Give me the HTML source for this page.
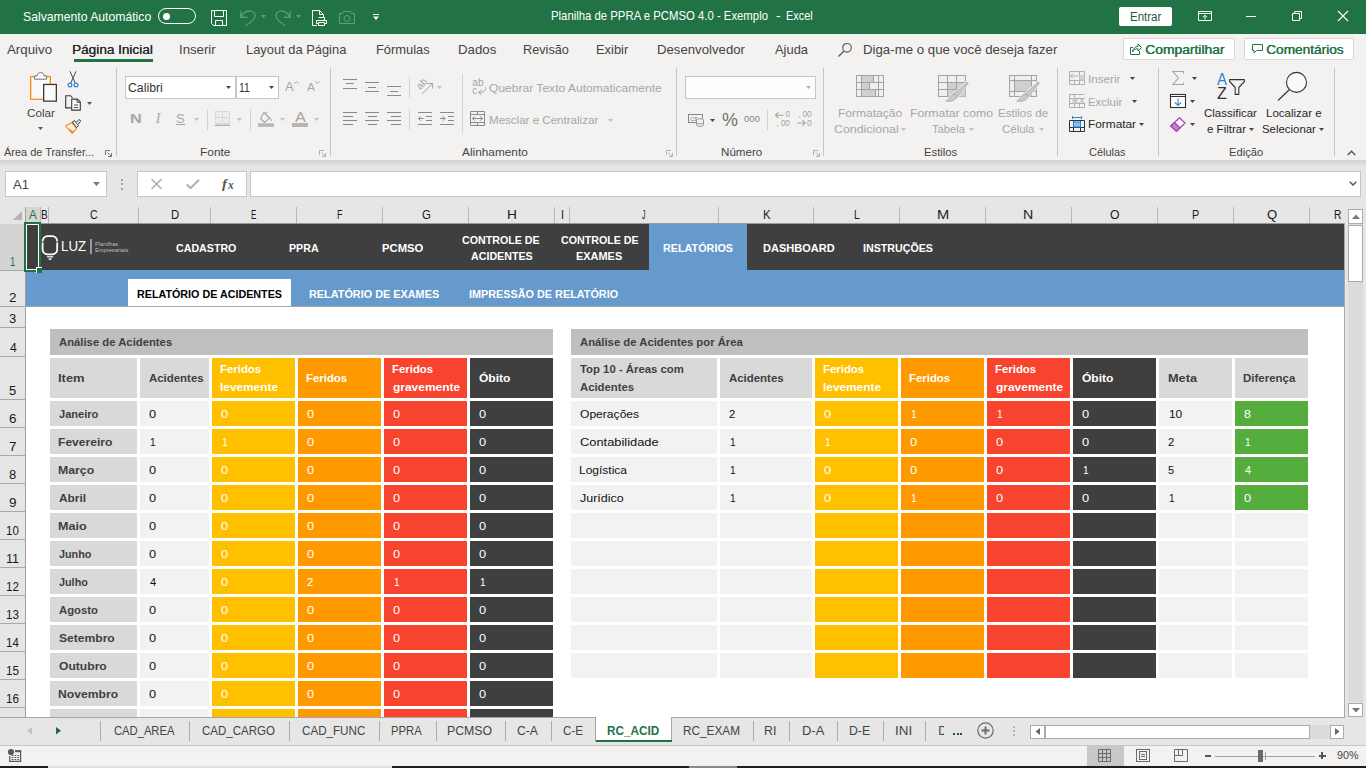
<!DOCTYPE html>
<html><head><meta charset="utf-8"><title>Excel</title>
<style>
html,body{margin:0;padding:0;background:#fff;}
body{width:1366px;height:768px;overflow:hidden;font-family:"Liberation Sans",sans-serif;}
#r{position:relative;width:1366px;height:768px;overflow:hidden;background:#fff;}
#r div,#r svg,#r span{position:absolute;}
#r div{box-sizing:border-box;}
.t{white-space:pre;transform-origin:0 50%;}
svg{overflow:visible;}
</style></head><body><div id="r">
<div style="left:0px;top:0px;width:1366px;height:34px;background:#217346;"></div>
<span id="t0" class="t" style="left:22.62px;top:11.03px;font-size:12.8px;line-height:12.8px;color:#fff;transform:scaleX(0.9534);">Salvamento Automático</span>
<div style="left:158px;top:8px;width:38px;height:16px;border:1px solid #fff;border-radius:8px;"></div>
<div style="left:162.5px;top:12.5px;width:7px;height:7px;background:#fff;border-radius:50%;"></div>
<svg style="left:210.5px;top:10px;" width="16" height="16" viewBox="0 0 16 16"><path d="M0.5 0.5H15.5V15.5H2.5L0.5 13.5Z M3.5 0.5V6.5H12.5V0.5 M4.5 15.5V10.5H11.5V15.5" fill="none" stroke="#fff" stroke-width="1"/></svg>
<svg style="left:240px;top:10px;" width="16" height="16" viewBox="0 0 16 16"><path d="M0.8 1V7.4H7.3 M1 7.2C3 3 7 0.4 11 1C14.6 1.7 16 5.2 14.4 8.2C13.3 10.2 10 12.6 6 15.8" fill="none" stroke="#62a07c" stroke-width="1.1"/></svg>
<svg style="left:260.5px;top:15px;" width="5" height="3" viewBox="0 0 5 3"><path d="M0 0H5L2.5 3Z" fill="#62a07c"/></svg>
<svg style="left:275px;top:10px;" width="16" height="16" viewBox="0 0 16 16"><path d="M15.2 1V7.4H8.7 M15 7.2C13 3 9 0.4 5 1C1.4 1.7 0 5.2 1.6 8.2C2.7 10.2 6 12.6 10 15.8" fill="none" stroke="#62a07c" stroke-width="1.1"/></svg>
<svg style="left:295.5px;top:15px;" width="5" height="3" viewBox="0 0 5 3"><path d="M0 0H5L2.5 3Z" fill="#62a07c"/></svg>
<svg style="left:311.5px;top:10px;" width="15" height="16" viewBox="0 0 15 16"><path d="M5 15.5H0.5V0.5H7.5L11.5 4.5V7 M7.5 0.5V4.5H11.5" fill="none" stroke="#fff" stroke-width="1"/><path d="M6.5 7.5H12.5V10 M4.5 13.5V10.5H14.5V13.5H12.5 M6.5 13.5H4.5 M6.5 12.5H12.5V15.5H6.5Z" fill="none" stroke="#fff" stroke-width="1"/></svg>
<svg style="left:339px;top:11px;" width="16" height="13" viewBox="0 0 16 13"><path d="M0.5 2.5H3.5L4.5 0.5H11.5L12.5 2.5H15.5V12.5H0.5Z" fill="none" stroke="#62a07c" stroke-width="1"/><circle cx="8" cy="7.5" r="3" fill="none" stroke="#62a07c"/></svg>
<svg style="left:373px;top:14px;" width="6" height="6" viewBox="0 0 6 6"><path d="M0 0.5H6" stroke="#fff" stroke-width="1"/><path d="M0 2.5H6L3 6Z" fill="#fff"/></svg>
<span id="t1" class="t" style="left:551.41px;top:10.03px;font-size:12.9px;line-height:12.9px;color:#fff;transform:scaleX(0.8803);">Planilha de PPRA e PCMSO 4.0 - Exemplo</span>
<span id="t2" class="t" style="left:775.86px;top:10.03px;font-size:12.9px;line-height:12.9px;color:#fff;transform:scaleX(1.0798);">-</span>
<span id="t3" class="t" style="left:785.85px;top:10.03px;font-size:12.9px;line-height:12.9px;color:#fff;transform:scaleX(0.8455);">Excel</span>
<div style="left:1119px;top:7px;width:53px;height:19px;background:#fff;border-radius:2px;"></div>
<span id="t4" class="t" style="left:1129.70px;top:11.03px;font-size:12.6px;line-height:12.6px;color:#1e5c3a;transform:scaleX(0.9139);">Entrar</span>
<svg style="left:1198px;top:11px;" width="14" height="10" viewBox="0 0 14 10"><path d="M0.5 0.5H13.5V9.5H0.5Z M0.5 2.5H13.5" fill="none" stroke="#fff"/><path d="M7 8.5V4.5 M5 6.2L7 4.2L9 6.2" fill="none" stroke="#fff"/></svg>
<div style="left:1246px;top:16px;width:10px;height:1px;background:#fff;"></div>
<svg style="left:1292px;top:11px;" width="10" height="10" viewBox="0 0 10 10"><path d="M0.5 2.5H7.5V9.5H0.5Z M2.5 2.5V0.5H9.5V7.5H7.5" fill="none" stroke="#fff"/></svg>
<svg style="left:1338px;top:11px;" width="10" height="10" viewBox="0 0 10 10"><path d="M0 0L10 10M10 0L0 10" fill="none" stroke="#fff" stroke-width="1.1"/></svg>
<div style="left:0px;top:34px;width:1366px;height:126px;background:#f3f2f1;"></div>
<span id="t5" class="t" style="left:7.00px;top:44.03px;font-size:12.8px;line-height:12.8px;color:#444;transform:scaleX(1.0377);">Arquivo</span>
<span id="t6" class="t" style="left:72.44px;top:44.03px;font-size:12.8px;line-height:12.8px;color:#2b2b2b;transform:scaleX(1.0607);text-shadow:0.2px 0 0 #2b2b2b;">Página Inicial</span>
<div style="left:73.5px;top:59px;width:79.5px;height:2.6px;background:#217346;"></div>
<span id="t7" class="t" style="left:179.17px;top:44.03px;font-size:12.8px;line-height:12.8px;color:#444;transform:scaleX(1.0319);">Inserir</span>
<span id="t8" class="t" style="left:245.59px;top:44.03px;font-size:12.8px;line-height:12.8px;color:#444;transform:scaleX(1.0069);">Layout da Página</span>
<span id="t9" class="t" style="left:376.49px;top:44.03px;font-size:12.8px;line-height:12.8px;color:#444;transform:scaleX(1.0069);">Fórmulas</span>
<span id="t10" class="t" style="left:458.46px;top:44.03px;font-size:12.8px;line-height:12.8px;color:#444;transform:scaleX(1.0365);">Dados</span>
<span id="t11" class="t" style="left:523.31px;top:44.03px;font-size:12.8px;line-height:12.8px;color:#444;transform:scaleX(0.9927);">Revisão</span>
<span id="t12" class="t" style="left:596.39px;top:44.03px;font-size:12.8px;line-height:12.8px;color:#444;transform:scaleX(1.0083);">Exibir</span>
<span id="t13" class="t" style="left:657.27px;top:44.03px;font-size:12.8px;line-height:12.8px;color:#444;transform:scaleX(1.0306);">Desenvolvedor</span>
<span id="t14" class="t" style="left:774.90px;top:44.03px;font-size:12.8px;line-height:12.8px;color:#444;transform:scaleX(1.0086);">Ajuda</span>
<svg style="left:838px;top:43px;" width="14" height="14" viewBox="0 0 14 14"><circle cx="9" cy="4.8" r="4.3" fill="none" stroke="#555" stroke-width="1.1"/><path d="M6 8L0.5 13.5" stroke="#555" stroke-width="1.2"/></svg>
<span id="t15" class="t" style="left:863.47px;top:44.03px;font-size:12.8px;line-height:12.8px;color:#444;transform:scaleX(1.0349);">Diga-me o que você deseja fazer</span>
<div style="left:1123px;top:38px;width:111.5px;height:22px;background:#fff;border:1px solid #dad8d6;border-radius:2px;"></div>
<svg style="left:1129.5px;top:43px;" width="12" height="12" viewBox="0 0 12 12"><path d="M3 4.5H0.5V11.5H9.5V8" fill="none" stroke="#217346"/><path d="M2.5 9C3 5.5 5 3.5 8 3.5V1L11.5 4.5L8 8V5.8C5.5 5.8 4 6.5 2.5 9Z" fill="none" stroke="#217346" stroke-linejoin="round"/></svg>
<span id="t16" class="t" style="left:1145.35px;top:44.03px;font-size:12.8px;line-height:12.8px;color:#217346;transform:scaleX(1.0826);text-shadow:0.4px 0 0 #217346;">Compartilhar</span>
<div style="left:1243.5px;top:38px;width:110px;height:22px;background:#fff;border:1px solid #dad8d6;border-radius:2px;"></div>
<svg style="left:1251.5px;top:44px;" width="11" height="10" viewBox="0 0 11 10"><path d="M0.5 0.5H10.5V6.5H4.5L2 9V6.5H0.5Z" fill="none" stroke="#217346"/></svg>
<span id="t17" class="t" style="left:1266.36px;top:44.03px;font-size:12.8px;line-height:12.8px;color:#217346;transform:scaleX(1.0676);text-shadow:0.4px 0 0 #217346;">Comentários</span>
<div style="left:116px;top:68px;width:1px;height:88px;background:#c8c6c4;"></div>
<div style="left:330px;top:68px;width:1px;height:88px;background:#c8c6c4;"></div>
<div style="left:676px;top:68px;width:1px;height:88px;background:#c8c6c4;"></div>
<div style="left:823px;top:68px;width:1px;height:88px;background:#c8c6c4;"></div>
<div style="left:1057px;top:68px;width:1px;height:88px;background:#c8c6c4;"></div>
<div style="left:1158px;top:68px;width:1px;height:88px;background:#c8c6c4;"></div>
<div style="left:1334px;top:68px;width:1px;height:88px;background:#c8c6c4;"></div>
<span id="t18" class="t" style="left:4.20px;top:147.03px;font-size:11.8px;line-height:11.8px;color:#444;transform:scaleX(0.9281);">Área de Transfer...</span>
<span id="t19" class="t" style="left:199.77px;top:147.03px;font-size:11.8px;line-height:11.8px;color:#444;transform:scaleX(1.0079);">Fonte</span>
<span id="t20" class="t" style="left:462.00px;top:147.03px;font-size:11.8px;line-height:11.8px;color:#444;transform:scaleX(1.0028);">Alinhamento</span>
<span id="t21" class="t" style="left:720.59px;top:147.03px;font-size:11.8px;line-height:11.8px;color:#444;transform:scaleX(0.9835);">Número</span>
<span id="t22" class="t" style="left:923.62px;top:147.03px;font-size:11.8px;line-height:11.8px;color:#444;transform:scaleX(0.9562);">Estilos</span>
<span id="t23" class="t" style="left:1089.19px;top:147.03px;font-size:11.8px;line-height:11.8px;color:#444;transform:scaleX(0.9263);">Células</span>
<span id="t24" class="t" style="left:1228.83px;top:147.03px;font-size:11.8px;line-height:11.8px;color:#444;transform:scaleX(0.9458);">Edição</span>
<svg style="left:105px;top:149.5px;" width="7" height="7" viewBox="0 0 7 7"><path d="M0.5 5V0.5H5" fill="none" stroke="#777"/><path d="M2.5 2.5L6 6 M6.5 3V6.5H3" fill="none" stroke="#777"/></svg>
<svg style="left:319px;top:149.5px;" width="7" height="7" viewBox="0 0 7 7"><path d="M0.5 5V0.5H5" fill="none" stroke="#b0b0b0"/><path d="M2.5 2.5L6 6 M6.5 3V6.5H3" fill="none" stroke="#b0b0b0"/></svg>
<svg style="left:665.5px;top:149.5px;" width="7" height="7" viewBox="0 0 7 7"><path d="M0.5 5V0.5H5" fill="none" stroke="#b0b0b0"/><path d="M2.5 2.5L6 6 M6.5 3V6.5H3" fill="none" stroke="#b0b0b0"/></svg>
<svg style="left:812.5px;top:149.5px;" width="7" height="7" viewBox="0 0 7 7"><path d="M0.5 5V0.5H5" fill="none" stroke="#b0b0b0"/><path d="M2.5 2.5L6 6 M6.5 3V6.5H3" fill="none" stroke="#b0b0b0"/></svg>
<svg style="left:1347px;top:149.5px;" width="9" height="6" viewBox="0 0 9 6"><path d="M0.7 5L4.5 1.2L8.3 5" fill="none" stroke="#555" stroke-width="1.4"/></svg>
<svg style="left:29px;top:71px;" width="29" height="32" viewBox="0 0 29 32"><rect x="1.5" y="5.4" width="20" height="23" fill="#fafafa" stroke="#ee8a2a" stroke-width="1"/><rect x="2.5" y="6.4" width="18" height="21" fill="none" stroke="#fbd98a" stroke-width="1"/>
<path d="M5.6 8.2V4.9H8.2C8.2 2.9 9.6 1.5 11.6 1.5C13.6 1.5 15 2.9 15 4.9H17.6V8.2Z" fill="#fafafa" stroke="#757575" stroke-width="1"/>
<rect x="14.65" y="13.45" width="12.7" height="16.7" fill="#fafafa" stroke="#3a3a3a" stroke-width="1.3"/></svg>
<span id="t25" class="t" style="left:27.05px;top:108.03px;font-size:11.8px;line-height:11.8px;color:#444;transform:scaleX(0.9896);">Colar</span>
<svg style="left:38px;top:127px;" width="5" height="3" viewBox="0 0 5 3"><path d="M0 0H5L2.5 3Z" fill="#555"/></svg>
<svg style="left:67px;top:71px;" width="12" height="17" viewBox="0 0 12 17"><path d="M3 0.3L8.2 12 M9 0.3L3.8 12" fill="none" stroke="#4a4a4a" stroke-width="1"/><circle cx="3" cy="14" r="1.9" fill="none" stroke="#2b88d8" stroke-width="1.2"/><circle cx="9" cy="14" r="1.9" fill="none" stroke="#2b88d8" stroke-width="1.2"/></svg>
<svg style="left:65px;top:95px;" width="17" height="16" viewBox="0 0 17 16"><path d="M6.5 12.9H0.7V0.7H5.5L7.5 2.7" fill="none" stroke="#3a3a3a" stroke-width="1.1"/><path d="M6.7 4.1H12.3L15.3 7.1V15.1H6.7Z" fill="#fafafa" stroke="#3a3a3a" stroke-width="1.1"/><path d="M12 4.3V7.3H15" fill="none" stroke="#3a3a3a" stroke-width="0.9"/><path d="M9 10H13.2 M9 12.6H13.2" stroke="#4a4a4a"/></svg>
<svg style="left:87px;top:102px;" width="5" height="3" viewBox="0 0 5 3"><path d="M0 0H5L2.5 3Z" fill="#555"/></svg>
<svg style="left:65px;top:119px;" width="17" height="15" viewBox="0 0 17 15"><path d="M0.6 7L6.8 3.4L11.6 9.6L7.2 14.4Z" fill="#fdf0e2" stroke="#ee8a2a" stroke-width="1.1" stroke-linejoin="round"/><path d="M2 8.5L8.8 12.4L7.2 14.2Z" fill="#ee8a2a"/><path d="M7.3 3L9.4 1.6L13.4 6.6L11.6 8.6Z" fill="#f3f2f1" stroke="#3a3a3a" stroke-width="1" stroke-linejoin="round"/><path d="M11 3.6L13.8 0.9C14.6 0.3 16 1.6 15.4 2.5L12.8 5.6" fill="#f3f2f1" stroke="#3a3a3a" stroke-width="1" stroke-linejoin="round"/></svg>
<div style="left:125px;top:76px;width:111px;height:23px;background:#fff;border:1px solid #c6c6c6;"></div>
<div style="left:236px;top:76px;width:43px;height:23px;background:#fff;border:1px solid #c6c6c6;"></div>
<span id="t26" class="t" style="left:127.72px;top:82.04px;font-size:12px;line-height:12px;color:#333;transform:scaleX(1.0228);">Calibri</span>
<span id="t27" class="t" style="left:239.15px;top:82.04px;font-size:12px;line-height:12px;color:#333;transform:scaleX(0.8645);">11</span>
<svg style="left:226px;top:86px;" width="5" height="3" viewBox="0 0 5 3"><path d="M0 0H5L2.5 3Z" fill="#444"/></svg>
<svg style="left:269px;top:86px;" width="5" height="3" viewBox="0 0 5 3"><path d="M0 0H5L2.5 3Z" fill="#444"/></svg>
<span id="t28" class="t" style="left:285.20px;top:80.03px;font-size:13.5px;line-height:13.5px;color:#a6a6a6;transform:scaleX(0.9702);">A</span>
<svg style="left:294px;top:80.5px;" width="5" height="3" viewBox="0 0 5 3"><path d="M0.3 2.8L2.5 0.5L4.7 2.8" fill="none" stroke="#a6a6a6"/></svg>
<span id="t29" class="t" style="left:307.00px;top:82.02px;font-size:11.5px;line-height:11.5px;color:#a6a6a6;transform:scaleX(1.0354);">A</span>
<svg style="left:315px;top:81px;" width="5" height="3" viewBox="0 0 5 3"><path d="M0.3 0.3L2.5 2.6L4.7 0.3" fill="none" stroke="#a6a6a6"/></svg>
<span id="t30" class="t" style="left:129.58px;top:112.02px;font-size:13.2px;line-height:13.2px;color:#a6a6a6;transform:scaleX(1.2376);font-weight:bold;">N</span>
<span id="t31" class="t" style="left:155.72px;top:112.03px;font-size:14px;line-height:14px;color:#a6a6a6;font-style:italic;font-family:'Liberation Serif',serif;">I</span>
<span id="t32" class="t" style="left:175.79px;top:112.02px;font-size:13.2px;line-height:13.2px;color:#a6a6a6;transform:scaleX(0.9952);">S</span>
<div style="left:176px;top:124px;width:8.5px;height:1px;background:#a6a6a6;"></div>
<svg style="left:194px;top:118px;" width="5" height="3" viewBox="0 0 5 3"><path d="M0 0H5L2.5 3Z" fill="#c0c0c0"/></svg>
<div style="left:207px;top:109px;width:1px;height:21px;background:#d4d2d0;"></div>
<div style="left:250px;top:109px;width:1px;height:21px;background:#d4d2d0;"></div>
<svg style="left:215px;top:111px;" width="15" height="15" viewBox="0 0 15 15"><rect x="0.5" y="0.5" width="14" height="12" fill="#ececec"/><path d="M0.5 0.5H14.5V12.5H0.5Z M7.5 0.5V12.5 M0.5 6.5H14.5" fill="none" stroke="#cdcdcd" stroke-dasharray="1.6 1.1"/><path d="M0 14.2H15" stroke="#a3a3a3" stroke-width="1.2"/></svg>
<svg style="left:237px;top:118px;" width="5" height="3" viewBox="0 0 5 3"><path d="M0 0H5L2.5 3Z" fill="#c0c0c0"/></svg>
<svg style="left:258px;top:111px;" width="16" height="16" viewBox="0 0 16 16"><path d="M6 1.5L11.5 7L6.5 11.5L2.5 7.5Z" fill="none" stroke="#a6a6a6" stroke-width="1.1" stroke-linejoin="round"/><path d="M7.5 3C7.5 1.5 8.5 0.6 9.5 1.4 M11.8 6.5C13.2 8 13.5 9 13.3 10.2" fill="none" stroke="#a6a6a6"/><rect x="0" y="12.3" width="16" height="3.5" fill="#b8b5b2"/></svg>
<svg style="left:280px;top:118px;" width="5" height="3" viewBox="0 0 5 3"><path d="M0 0H5L2.5 3Z" fill="#c0c0c0"/></svg>
<span id="t33" class="t" style="left:294.50px;top:110.03px;font-size:14.5px;line-height:14.5px;color:#a6a6a6;transform:scaleX(1.1291);">A</span>
<div style="left:292px;top:123.3px;width:16px;height:3.5px;background:#b8b5b2;"></div>
<svg style="left:314px;top:118px;" width="5" height="3" viewBox="0 0 5 3"><path d="M0 0H5L2.5 3Z" fill="#c0c0c0"/></svg>
<div style="left:343.0px;top:78.5px;width:14px;height:1px;background:#8a8a8a;"></div>
<div style="left:346.0px;top:83px;width:8px;height:1px;background:#8a8a8a;"></div>
<div style="left:343.0px;top:87.5px;width:14px;height:1px;background:#8a8a8a;"></div>
<div style="left:365.0px;top:82px;width:14px;height:1px;background:#8a8a8a;"></div>
<div style="left:368.0px;top:86.5px;width:8px;height:1px;background:#8a8a8a;"></div>
<div style="left:365.0px;top:91px;width:14px;height:1px;background:#8a8a8a;"></div>
<div style="left:387.0px;top:86px;width:14px;height:1px;background:#8a8a8a;"></div>
<div style="left:390.0px;top:90.5px;width:8px;height:1px;background:#8a8a8a;"></div>
<div style="left:387.0px;top:95px;width:14px;height:1px;background:#8a8a8a;"></div>
<div style="left:409px;top:77px;width:1px;height:21px;background:#d4d2d0;"></div>
<div style="left:409px;top:109px;width:1px;height:21px;background:#d4d2d0;"></div>
<svg style="left:416px;top:77px;" width="18" height="18" viewBox="0 0 18 18"><text x="0" y="0" font-family="Liberation Sans" font-size="10" fill="#a6a6a6" transform="translate(4.2 13) rotate(-47)">ab</text><path d="M6 16.8L16.3 6.8 M11.3 6.5H16.6V11.8" fill="none" stroke="#a6a6a6" stroke-width="1"/></svg>
<svg style="left:437px;top:86px;" width="5" height="3" viewBox="0 0 5 3"><path d="M0 0H5L2.5 3Z" fill="#c0c0c0"/></svg>
<div style="left:462px;top:74px;width:1px;height:59px;background:#d4d2d0;"></div>
<svg style="left:472px;top:78px;" width="15" height="17" viewBox="0 0 15 17"><text x="0.3" y="8.4" font-family="Liberation Sans" font-size="10" fill="#a6a6a6" textLength="11.3" lengthAdjust="spacingAndGlyphs">ab</text><text x="0.3" y="15.8" font-family="Liberation Sans" font-size="10" fill="#a6a6a6">c</text><path d="M13.4 9.3C14.2 12 12.5 14.3 7 14.4 M9.6 11.8L6.6 14.4L9.6 17" fill="none" stroke="#a6a6a6" stroke-width="1"/></svg>
<span id="t34" class="t" style="left:488.83px;top:83.03px;font-size:11.8px;line-height:11.8px;color:#a6a6a6;transform:scaleX(1.0223);">Quebrar Texto Automaticamente</span>
<div style="left:343px;top:112px;width:14px;height:1px;background:#8a8a8a;"></div>
<div style="left:343px;top:116px;width:10px;height:1px;background:#8a8a8a;"></div>
<div style="left:343px;top:120px;width:14px;height:1px;background:#8a8a8a;"></div>
<div style="left:343px;top:124px;width:10px;height:1px;background:#8a8a8a;"></div>
<div style="left:365.0px;top:112px;width:14px;height:1px;background:#8a8a8a;"></div>
<div style="left:367.5px;top:116px;width:9px;height:1px;background:#8a8a8a;"></div>
<div style="left:365.0px;top:120px;width:14px;height:1px;background:#8a8a8a;"></div>
<div style="left:367.5px;top:124px;width:9px;height:1px;background:#8a8a8a;"></div>
<div style="left:387px;top:112px;width:14px;height:1px;background:#8a8a8a;"></div>
<div style="left:391px;top:116px;width:10px;height:1px;background:#8a8a8a;"></div>
<div style="left:387px;top:120px;width:14px;height:1px;background:#8a8a8a;"></div>
<div style="left:391px;top:124px;width:10px;height:1px;background:#8a8a8a;"></div>
<svg style="left:418px;top:111px;" width="14" height="15" viewBox="0 0 14 15"><path d="M0 1.5H14 M8 5.5H14 M8 9.5H14 M0 13.5H14" stroke="#8a8a8a"/><path d="M0.5 7.5H5.5 M2.8 5.2L0.5 7.5L2.8 9.8" fill="none" stroke="#8a8a8a"/></svg>
<svg style="left:440px;top:111px;" width="14" height="15" viewBox="0 0 14 15"><path d="M0 1.5H14 M8 5.5H14 M8 9.5H14 M0 13.5H14" stroke="#8a8a8a"/><path d="M0 7.5H5 M2.7 5.2L5 7.5L2.7 9.8" fill="none" stroke="#8a8a8a"/></svg>
<svg style="left:470px;top:111px;" width="15" height="15" viewBox="0 0 15 15"><path d="M0.5 0.5H14.5V14.5H0.5Z M0.5 3.5H14.5 M0.5 11.5H14.5 M7.5 0.5V3.5 M7.5 11.5V14.5" fill="none" stroke="#8a8a8a"/><path d="M2.5 7.5H12.5 M4.6 5.4L2.5 7.5L4.6 9.6 M10.4 5.4L12.5 7.5L10.4 9.6" fill="none" stroke="#8a8a8a"/></svg>
<span id="t35" class="t" style="left:488.50px;top:115.03px;font-size:11.8px;line-height:11.8px;color:#a6a6a6;transform:scaleX(0.9801);">Mesclar e Centralizar</span>
<svg style="left:608px;top:119px;" width="5" height="3" viewBox="0 0 5 3"><path d="M0 0H5L2.5 3Z" fill="#c0c0c0"/></svg>
<div style="left:685px;top:76px;width:131px;height:23px;background:#fdfdfd;border:1px solid #c6c6c6;"></div>
<svg style="left:806px;top:86px;" width="5" height="3" viewBox="0 0 5 3"><path d="M0 0H5L2.5 3Z" fill="#b0b0b0"/></svg>
<svg style="left:688px;top:114px;" width="16" height="13" viewBox="0 0 16 13"><rect x="0.5" y="0.5" width="14" height="8" fill="none" stroke="#888"/><text x="2" y="7" font-family="Liberation Sans" font-size="6" fill="#888">C$</text><ellipse cx="12" cy="6" rx="3.5" ry="1.3" fill="#f3f2f1" stroke="#999"/><path d="M8.5 6V11C8.5 12.8 15.5 12.8 15.5 11V6 M8.5 8.5C8.5 10.2 15.5 10.2 15.5 8.5" fill="#f3f2f1" stroke="#999"/></svg>
<svg style="left:710px;top:118.5px;" width="5" height="3" viewBox="0 0 5 3"><path d="M0 0H5L2.5 3Z" fill="#444"/></svg>
<span id="t36" class="t" style="left:721.94px;top:111.03px;font-size:18.6px;line-height:18.6px;color:#707070;transform:scaleX(0.9673);">%</span>
<span id="t37" class="t" style="left:743.90px;top:114.03px;font-size:9.6px;line-height:9.6px;color:#888;transform:scaleX(1.0014);">000</span>
<div style="left:767px;top:109px;width:1px;height:21px;background:#d4d2d0;"></div>
<svg style="left:775px;top:110px;" width="16" height="17" viewBox="0 0 16 17"><path d="M0.5 5.3H8.5 M3.4 2.4L0.5 5.3L3.4 8.2" fill="none" stroke="#a3a3a3" stroke-width="1.1"/><text x="10.5" y="7.4" font-family="Liberation Sans" font-size="9" fill="#a3a3a3" textLength="4.3" lengthAdjust="spacingAndGlyphs">0</text><text x="1.6" y="16" font-family="Liberation Sans" font-size="9" fill="#a3a3a3" textLength="2" lengthAdjust="spacingAndGlyphs">,</text><text x="5.9" y="16" font-family="Liberation Sans" font-size="9" fill="#a3a3a3" textLength="8.9" lengthAdjust="spacingAndGlyphs">00</text></svg>
<svg style="left:797px;top:110px;" width="16" height="17" viewBox="0 0 16 17"><text x="1.6" y="7.4" font-family="Liberation Sans" font-size="9" fill="#a3a3a3" textLength="2" lengthAdjust="spacingAndGlyphs">,</text><text x="5.4" y="7.4" font-family="Liberation Sans" font-size="9" fill="#a3a3a3" textLength="9.3" lengthAdjust="spacingAndGlyphs">00</text><path d="M0.3 13H8.3 M5.4 10.1L8.3 13L5.4 15.9" fill="none" stroke="#a3a3a3" stroke-width="1.1"/><text x="10" y="16" font-family="Liberation Sans" font-size="9" fill="#a3a3a3" textLength="4.7" lengthAdjust="spacingAndGlyphs">0</text></svg>
<svg style="left:856px;top:75px;" width="28" height="22" viewBox="0 0 28 22"><rect x="0.5" y="0.5" width="27" height="21" fill="#efefef" stroke="#a3a3a3"/><rect x="5.5" y="1" width="12" height="6" fill="#cfcfcf"/><rect x="5.5" y="8" width="8" height="6" fill="#cfcfcf"/><rect x="5.5" y="15" width="14" height="6" fill="#cfcfcf"/><path d="M5.5 0.5V21.5 M17.5 0.5V7.5 M13.5 7.5V14.5 M19.5 14.5V21.5 M22.5 0.5V21.5 M0.5 7.5H27.5 M0.5 14.5H27.5" fill="none" stroke="#a3a3a3"/></svg>
<span id="t38" class="t" style="left:838.36px;top:108.03px;font-size:11.8px;line-height:11.8px;color:#a6a6a6;transform:scaleX(1.0185);">Formatação</span>
<span id="t39" class="t" style="left:833.82px;top:124.03px;font-size:11.8px;line-height:11.8px;color:#a6a6a6;transform:scaleX(1.0492);">Condicional</span>
<svg style="left:901px;top:127.5px;" width="5" height="3" viewBox="0 0 5 3"><path d="M0 0H5L2.5 3Z" fill="#c0c0c0"/></svg>
<svg style="left:938px;top:75px;" width="31" height="27" viewBox="0 0 31 27"><rect x="0.5" y="0.5" width="27" height="21" fill="#efefef" stroke="#a3a3a3"/><rect x="9.5" y="7.5" width="18" height="14" fill="#cfcfcf"/><path d="M9.5 0.5V21.5 M18.5 0.5V21.5 M0.5 7.5H27.5 M0.5 14.5H27.5" stroke="#a3a3a3"/><g stroke-linejoin="round"><path d="M29.3 7L30.2 8.2L19.4 21.8L16.2 18.8Z" fill="#c9c9c9" stroke="#f3f2f1" stroke-width="2.4"/><path d="M19 21.6C18 25.5 12.5 27.3 7.8 26C11 25 11.5 21.5 15.5 18.6Z" fill="#c9c9c9" stroke="#f3f2f1" stroke-width="2"/><path d="M29.3 7L30.2 8.2L19.4 21.8L16.2 18.8Z" fill="#c9c9c9" stroke="#a6a6a6" stroke-width="0.8"/><path d="M19 21.6C18 25.5 12.5 27.3 7.8 26C11 25 11.5 21.5 15.5 18.6Z" fill="#c9c9c9" stroke="#a6a6a6" stroke-width="0.8"/></g></svg>
<span id="t40" class="t" style="left:910.44px;top:108.03px;font-size:11.8px;line-height:11.8px;color:#a6a6a6;transform:scaleX(1.0382);">Formatar como</span>
<span id="t41" class="t" style="left:931.82px;top:124.03px;font-size:11.8px;line-height:11.8px;color:#a6a6a6;transform:scaleX(0.9520);">Tabela</span>
<svg style="left:968.5px;top:127.5px;" width="5" height="3" viewBox="0 0 5 3"><path d="M0 0H5L2.5 3Z" fill="#c0c0c0"/></svg>
<svg style="left:1009px;top:75px;" width="31" height="27" viewBox="0 0 31 27"><rect x="0.5" y="0.5" width="27" height="21" fill="#efefef" stroke="#a3a3a3"/><rect x="5.5" y="5.5" width="17" height="11" fill="#cfcfcf"/><path d="M5.5 0.5V21.5 M22.5 0.5V21.5 M0.5 5.5H27.5 M0.5 16.5H27.5" stroke="#a3a3a3"/><g stroke-linejoin="round"><path d="M29.3 7L30.2 8.2L19.4 21.8L16.2 18.8Z" fill="#c9c9c9" stroke="#f3f2f1" stroke-width="2.4"/><path d="M19 21.6C18 25.5 12.5 27.3 7.8 26C11 25 11.5 21.5 15.5 18.6Z" fill="#c9c9c9" stroke="#f3f2f1" stroke-width="2"/><path d="M29.3 7L30.2 8.2L19.4 21.8L16.2 18.8Z" fill="#c9c9c9" stroke="#a6a6a6" stroke-width="0.8"/><path d="M19 21.6C18 25.5 12.5 27.3 7.8 26C11 25 11.5 21.5 15.5 18.6Z" fill="#c9c9c9" stroke="#a6a6a6" stroke-width="0.8"/></g></svg>
<span id="t42" class="t" style="left:997.80px;top:108.03px;font-size:11.8px;line-height:11.8px;color:#a6a6a6;transform:scaleX(0.9807);">Estilos de</span>
<span id="t43" class="t" style="left:1002.16px;top:124.03px;font-size:11.8px;line-height:11.8px;color:#a6a6a6;transform:scaleX(0.9705);">Célula</span>
<svg style="left:1039px;top:127.5px;" width="5" height="3" viewBox="0 0 5 3"><path d="M0 0H5L2.5 3Z" fill="#c0c0c0"/></svg>
<svg style="left:1069px;top:71px;" width="16" height="14" viewBox="0 0 16 14"><path d="M0.5 0.5H15.5V13.5H0.5Z M0.5 9.5H15.5 M5.5 9.5V13.5 M10.5 0.5V13.5" fill="none" stroke="#b0b0b0"/><rect x="10.5" y="4" width="5" height="5.5" fill="#d0d0d0"/><path d="M1.5 5H9 M4 2.5L1.5 5L4 7.5" fill="none" stroke="#b0b0b0"/></svg>
<span id="t44" class="t" style="left:1087.59px;top:74.03px;font-size:11.8px;line-height:11.8px;color:#a6a6a6;transform:scaleX(0.9904);">Inserir</span>
<svg style="left:1130px;top:77px;" width="5" height="3" viewBox="0 0 5 3"><path d="M0 0H5L2.5 3Z" fill="#444"/></svg>
<svg style="left:1069px;top:94px;" width="16" height="14" viewBox="0 0 16 14"><path d="M0.5 0.5H15.5 M0.5 4.5H15.5 M0.5 9.5H15.5 M0.5 13.5H15.5 M0.5 0.5V13.5 M5.5 0.5V13.5 M10.5 9.5V13.5 M15.5 9.5V13.5" fill="none" stroke="#b0b0b0"/><rect x="3.5" y="4.5" width="5" height="5" fill="#c8c8c8"/><path d="M10 3.5L15.5 9.5 M15.5 3.5L10 9.5" stroke="#b0b0b0"/></svg>
<span id="t45" class="t" style="left:1087.61px;top:97.02px;font-size:11.8px;line-height:11.8px;color:#a6a6a6;transform:scaleX(0.9673);">Excluir</span>
<svg style="left:1132px;top:99.5px;" width="5" height="3" viewBox="0 0 5 3"><path d="M0 0H5L2.5 3Z" fill="#444"/></svg>
<svg style="left:1069px;top:116px;" width="16" height="16" viewBox="0 0 16 16"><path d="M3.5 0V3 M12.5 0V3 M3.5 1.5H12.5" stroke="#2b88d8"/><path d="M0.5 4.5H15.5V15.5H0.5Z M0.5 11.5H15.5 M4.5 4.5V15.5 M11.5 4.5V15.5" fill="none" stroke="#333"/><rect x="4.5" y="6" width="7" height="5" fill="#8cc0ec" stroke="#2b88d8"/></svg>
<span id="t46" class="t" style="left:1087.87px;top:119.03px;font-size:11.8px;line-height:11.8px;color:#262626;transform:scaleX(1.0046);">Formatar</span>
<svg style="left:1139px;top:122.5px;" width="5" height="3" viewBox="0 0 5 3"><path d="M0 0H5L2.5 3Z" fill="#444"/></svg>
<svg style="left:1172px;top:71px;" width="12" height="14" viewBox="0 0 12 14"><path d="M11.5 2.5V0.5H0.8L6.5 7L0.8 13.5H11.5V11.5" fill="none" stroke="#a6a6a6" stroke-width="1.1"/></svg>
<svg style="left:1192px;top:77px;" width="5" height="3" viewBox="0 0 5 3"><path d="M0 0H5L2.5 3Z" fill="#444"/></svg>
<svg style="left:1170px;top:94px;" width="16" height="14" viewBox="0 0 16 14"><rect x="0.5" y="0.5" width="15" height="13" fill="#fff" stroke="#333" stroke-width="1.1"/><path d="M0.5 2.5H15.5" stroke="#333"/><path d="M8 4.5V11.5 M5 8.5L8 11.5L11 8.5" fill="none" stroke="#2b88d8" stroke-width="1.1"/></svg>
<svg style="left:1190px;top:99.5px;" width="5" height="3" viewBox="0 0 5 3"><path d="M0 0H5L2.5 3Z" fill="#444"/></svg>
<svg style="left:1170px;top:116.5px;" width="16" height="15" viewBox="0 0 16 15"><path d="M0.8 9L9.5 0.8L15 6L6.5 14.2Z" fill="#fff" stroke="#a743b3" stroke-width="1.2" stroke-linejoin="round"/><path d="M0.8 9L4.5 5.5L10 10.8L6.5 14.2Z" fill="#c77dd0" stroke="#a743b3" stroke-width="1.2" stroke-linejoin="round"/></svg>
<svg style="left:1190px;top:122.5px;" width="5" height="3" viewBox="0 0 5 3"><path d="M0 0H5L2.5 3Z" fill="#444"/></svg>
<span id="t47" class="t" style="left:1217.00px;top:71.02px;font-size:16.2px;line-height:16.2px;color:#2b88d8;transform:scaleX(0.9187);">A</span>
<span id="t48" class="t" style="left:1216.50px;top:86.02px;font-size:15.8px;line-height:15.8px;color:#333;transform:scaleX(1.0127);">Z</span>
<svg style="left:1229px;top:79px;" width="16" height="16" viewBox="0 0 16 16"><path d="M0.6 0.6H15.4V2.5L9.8 8.5V15.4H6.2V8.5L0.6 2.5Z" fill="#f3f2f1" stroke="#333" stroke-width="1.1" stroke-linejoin="round"/></svg>
<span id="t49" class="t" style="left:1204.06px;top:108.03px;font-size:11.8px;line-height:11.8px;color:#262626;transform:scaleX(0.9720);">Classificar</span>
<span id="t50" class="t" style="left:1207.04px;top:124.03px;font-size:11.8px;line-height:11.8px;color:#262626;transform:scaleX(0.9756);">e Filtrar</span>
<svg style="left:1249px;top:127.5px;" width="5" height="3" viewBox="0 0 5 3"><path d="M0 0H5L2.5 3Z" fill="#444"/></svg>
<svg style="left:1277px;top:71px;" width="31" height="31" viewBox="0 0 31 31"><circle cx="19.5" cy="11.4" r="10" fill="#fafafa" stroke="#333" stroke-width="1.1"/><path d="M12.5 18.5L1 29.5" stroke="#333" stroke-width="1.2"/></svg>
<span id="t51" class="t" style="left:1265.80px;top:108.03px;font-size:11.8px;line-height:11.8px;color:#262626;transform:scaleX(0.9755);">Localizar e</span>
<span id="t52" class="t" style="left:1261.84px;top:124.03px;font-size:11.8px;line-height:11.8px;color:#262626;transform:scaleX(0.9669);">Selecionar</span>
<svg style="left:1319px;top:127.5px;" width="5" height="3" viewBox="0 0 5 3"><path d="M0 0H5L2.5 3Z" fill="#444"/></svg>
<div style="left:0px;top:160px;width:1366px;height:608px;background:#e6e6e6;"></div>
<div style="left:0px;top:160px;width:1366px;height:7px;background:linear-gradient(#d2d2d2,#e6e6e6);"></div>
<div style="left:5px;top:171px;width:102px;height:26px;background:#fff;border:1px solid #c6c6c6;"></div>
<span id="t53" class="t" style="left:12.50px;top:179.03px;font-size:12.8px;line-height:12.8px;color:#444;transform:scaleX(1.0173);">A1</span>
<svg style="left:93px;top:181.5px;" width="7" height="4" viewBox="0 0 7 4"><path d="M0 0H7L3.5 4Z" fill="#777"/></svg>
<div style="left:121px;top:178.5px;width:2px;height:2px;background:#a3a3a3;"></div>
<div style="left:121px;top:183px;width:2px;height:2px;background:#a3a3a3;"></div>
<div style="left:121px;top:187.5px;width:2px;height:2px;background:#a3a3a3;"></div>
<div style="left:137px;top:171px;width:110px;height:26px;background:#fff;border:1px solid #c6c6c6;"></div>
<svg style="left:150.5px;top:179px;" width="11" height="10" viewBox="0 0 11 10"><path d="M0.5 0L10.5 10 M10.5 0L0.5 10" stroke="#b0b0b0" stroke-width="1.6"/></svg>
<svg style="left:185.5px;top:179px;" width="14" height="10" viewBox="0 0 14 10"><path d="M0.8 5.5L4.5 9.2L13 0.8" fill="none" stroke="#b0b0b0" stroke-width="2"/></svg>
<span id="t54" class="t" style="left:222.30px;top:177.03px;font-size:13.5px;line-height:13.5px;color:#555;transform:scaleX(1.1062);font-weight:bold;font-style:italic;font-family:'Liberation Serif',serif;">f</span>
<span id="t55" class="t" style="left:228.38px;top:180.03px;font-size:11.5px;line-height:11.5px;color:#555;transform:scaleX(0.9913);font-weight:bold;font-style:italic;font-family:'Liberation Serif',serif;">x</span>
<div style="left:250px;top:171px;width:1111px;height:26px;background:#fff;border:1px solid #c6c6c6;"></div>
<svg style="left:1349px;top:181px;" width="8" height="5" viewBox="0 0 8 5"><path d="M0.7 0.7L4 4L7.3 0.7" fill="none" stroke="#555" stroke-width="1.5"/></svg>
<div style="left:26px;top:224px;width:1318px;height:493px;background:#fff;"></div>
<div style="left:26px;top:207px;width:14px;height:16px;background:#d5d5d5;"></div>
<div style="left:40px;top:207px;width:1px;height:16px;background:#b9b9b9;"></div>
<span id="t56" class="t" style="left:29.15px;top:209.03px;font-size:12.3px;line-height:12.3px;color:#217346;transform:scaleX(0.9559);">A</span>
<div style="left:48px;top:207px;width:1px;height:16px;background:#b9b9b9;"></div>
<span id="t57" class="t" style="left:41.26px;top:209.03px;font-size:12.3px;line-height:12.3px;color:#1a1a1a;transform:scaleX(0.8177);">B</span>
<div style="left:138px;top:207px;width:1px;height:16px;background:#b9b9b9;"></div>
<span id="t58" class="t" style="left:90.45px;top:209.03px;font-size:12.3px;line-height:12.3px;color:#1a1a1a;transform:scaleX(0.8630);">C</span>
<div style="left:210px;top:207px;width:1px;height:16px;background:#b9b9b9;"></div>
<span id="t59" class="t" style="left:170.97px;top:209.03px;font-size:12.3px;line-height:12.3px;color:#1a1a1a;transform:scaleX(0.9206);">D</span>
<div style="left:296px;top:207px;width:1px;height:16px;background:#b9b9b9;"></div>
<span id="t60" class="t" style="left:251.42px;top:209.03px;font-size:12.3px;line-height:12.3px;color:#1a1a1a;transform:scaleX(0.6541);">E</span>
<div style="left:382px;top:207px;width:1px;height:16px;background:#b9b9b9;"></div>
<span id="t61" class="t" style="left:337.35px;top:209.03px;font-size:12.3px;line-height:12.3px;color:#1a1a1a;transform:scaleX(0.7317);">F</span>
<div style="left:468px;top:207px;width:1px;height:16px;background:#b9b9b9;"></div>
<span id="t62" class="t" style="left:421.81px;top:209.03px;font-size:12.3px;line-height:12.3px;color:#1a1a1a;transform:scaleX(0.9292);">G</span>
<div style="left:554px;top:207px;width:1px;height:16px;background:#b9b9b9;"></div>
<span id="t63" class="t" style="left:506.78px;top:209.03px;font-size:12.3px;line-height:12.3px;color:#1a1a1a;transform:scaleX(1.1129);">H</span>
<div style="left:569px;top:207px;width:1px;height:16px;background:#b9b9b9;"></div>
<span id="t64" class="t" style="left:560.99px;top:209.03px;font-size:12.3px;line-height:12.3px;color:#1a1a1a;transform:scaleX(0.8920);">I</span>
<div style="left:718px;top:207px;width:1px;height:16px;background:#b9b9b9;"></div>
<span id="t65" class="t" style="left:642.04px;top:209.03px;font-size:12.3px;line-height:12.3px;color:#1a1a1a;transform:scaleX(0.5589);">J</span>
<div style="left:813px;top:207px;width:1px;height:16px;background:#b9b9b9;"></div>
<span id="t66" class="t" style="left:762.96px;top:209.03px;font-size:12.3px;line-height:12.3px;color:#1a1a1a;transform:scaleX(0.9281);">K</span>
<div style="left:899px;top:207px;width:1px;height:16px;background:#b9b9b9;"></div>
<span id="t67" class="t" style="left:853.86px;top:209.03px;font-size:12.3px;line-height:12.3px;color:#1a1a1a;transform:scaleX(0.8253);">L</span>
<div style="left:985px;top:207px;width:1px;height:16px;background:#b9b9b9;"></div>
<span id="t68" class="t" style="left:936.50px;top:209.03px;font-size:12.3px;line-height:12.3px;color:#1a1a1a;transform:scaleX(1.1944);">M</span>
<div style="left:1071px;top:207px;width:1px;height:16px;background:#b9b9b9;"></div>
<span id="t69" class="t" style="left:1023.44px;top:209.03px;font-size:12.3px;line-height:12.3px;color:#1a1a1a;transform:scaleX(1.1563);">N</span>
<div style="left:1157px;top:207px;width:1px;height:16px;background:#b9b9b9;"></div>
<span id="t70" class="t" style="left:1109.88px;top:209.03px;font-size:12.3px;line-height:12.3px;color:#1a1a1a;transform:scaleX(0.9933);">O</span>
<div style="left:1233px;top:207px;width:1px;height:16px;background:#b9b9b9;"></div>
<span id="t71" class="t" style="left:1191.61px;top:209.03px;font-size:12.3px;line-height:12.3px;color:#1a1a1a;transform:scaleX(0.8771);">P</span>
<div style="left:1309px;top:207px;width:1px;height:16px;background:#b9b9b9;"></div>
<span id="t72" class="t" style="left:1266.84px;top:209.03px;font-size:12.3px;line-height:12.3px;color:#1a1a1a;transform:scaleX(1.0643);">Q</span>
<span id="t73" class="t" style="left:1333.84px;top:209.03px;font-size:12.3px;line-height:12.3px;color:#1a1a1a;transform:scaleX(0.8405);">R</span>
<svg style="left:12.8px;top:210.7px;" width="9" height="9" viewBox="0 0 9 9"><path d="M9 0V9H0Z" fill="#b4b4b4"/></svg>
<div style="left:0px;top:224px;width:25px;height:46px;background:#d3d3d3;"></div>
<div style="left:0px;top:270px;width:25px;height:1px;background:#a8a8a8;"></div>
<span id="t74" class="t" style="left:10.16px;top:256.02px;font-size:12px;line-height:12px;color:#217346;transform:scaleX(0.7908);">1</span>
<div style="left:0px;top:306px;width:25px;height:1px;background:#a8a8a8;"></div>
<span id="t75" class="t" style="left:9.12px;top:292.02px;font-size:12px;line-height:12px;color:#1a1a1a;transform:scaleX(1.1200);">2</span>
<div style="left:0px;top:327px;width:25px;height:1px;background:#a8a8a8;"></div>
<span id="t76" class="t" style="left:9.34px;top:313.02px;font-size:12px;line-height:12px;color:#1a1a1a;transform:scaleX(1.0839);">3</span>
<div style="left:0px;top:356px;width:25px;height:1px;background:#a8a8a8;"></div>
<span id="t77" class="t" style="left:9.56px;top:342.02px;font-size:12px;line-height:12px;color:#1a1a1a;transform:scaleX(1.0182);">4</span>
<div style="left:0px;top:399px;width:25px;height:1px;background:#a8a8a8;"></div>
<span id="t78" class="t" style="left:9.34px;top:385.02px;font-size:12px;line-height:12px;color:#1a1a1a;transform:scaleX(1.0839);">5</span>
<div style="left:0px;top:427px;width:25px;height:1px;background:#a8a8a8;"></div>
<span id="t79" class="t" style="left:9.12px;top:413.02px;font-size:12px;line-height:12px;color:#1a1a1a;transform:scaleX(1.1200);">6</span>
<div style="left:0px;top:455px;width:25px;height:1px;background:#a8a8a8;"></div>
<span id="t80" class="t" style="left:9.12px;top:441.02px;font-size:12px;line-height:12px;color:#1a1a1a;transform:scaleX(1.1200);">7</span>
<div style="left:0px;top:483px;width:25px;height:1px;background:#a8a8a8;"></div>
<span id="t81" class="t" style="left:9.34px;top:469.02px;font-size:12px;line-height:12px;color:#1a1a1a;transform:scaleX(1.0839);">8</span>
<div style="left:0px;top:511px;width:25px;height:1px;background:#a8a8a8;"></div>
<span id="t82" class="t" style="left:9.12px;top:497.02px;font-size:12px;line-height:12px;color:#1a1a1a;transform:scaleX(1.1200);">9</span>
<div style="left:0px;top:539px;width:25px;height:1px;background:#a8a8a8;"></div>
<span id="t83" class="t" style="left:6.28px;top:525.02px;font-size:12px;line-height:12px;color:#1a1a1a;transform:scaleX(0.9594);">10</span>
<div style="left:0px;top:567px;width:25px;height:1px;background:#a8a8a8;"></div>
<span id="t84" class="t" style="left:6.21px;top:553.02px;font-size:12px;line-height:12px;color:#1a1a1a;transform:scaleX(1.0516);">11</span>
<div style="left:0px;top:595px;width:25px;height:1px;background:#a8a8a8;"></div>
<span id="t85" class="t" style="left:6.27px;top:581.02px;font-size:12px;line-height:12px;color:#1a1a1a;transform:scaleX(0.9743);">12</span>
<div style="left:0px;top:623px;width:25px;height:1px;background:#a8a8a8;"></div>
<span id="t86" class="t" style="left:6.27px;top:609.02px;font-size:12px;line-height:12px;color:#1a1a1a;transform:scaleX(0.9743);">13</span>
<div style="left:0px;top:651px;width:25px;height:1px;background:#a8a8a8;"></div>
<span id="t87" class="t" style="left:6.28px;top:637.02px;font-size:12px;line-height:12px;color:#1a1a1a;transform:scaleX(0.9594);">14</span>
<div style="left:0px;top:679px;width:25px;height:1px;background:#a8a8a8;"></div>
<span id="t88" class="t" style="left:6.27px;top:665.02px;font-size:12px;line-height:12px;color:#1a1a1a;transform:scaleX(0.9743);">15</span>
<div style="left:0px;top:707px;width:25px;height:1px;background:#a8a8a8;"></div>
<span id="t89" class="t" style="left:6.27px;top:693.02px;font-size:12px;line-height:12px;color:#1a1a1a;transform:scaleX(0.9743);">16</span>
<div style="left:25px;top:207px;width:1px;height:510px;background:#a0a0a0;"></div>
<div style="left:26px;top:224px;width:1318px;height:46px;background:#3f3f3f;"></div>
<div style="left:26px;top:270px;width:1318px;height:36px;background:#6699cc;"></div>
<div style="left:649px;top:224px;width:98px;height:47px;background:#6699cc;"></div>
<div style="left:26px;top:306px;width:1318px;height:1px;background:#a8a8a8;"></div>
<div style="left:26px;top:223px;width:1318px;height:1px;background:#9a9a9a;"></div>
<div style="left:24px;top:222px;width:17px;height:50px;border:2px solid #217346;"></div>
<div style="left:26px;top:224px;width:13px;height:46px;border:1px solid #fff;"></div>
<div style="left:36px;top:267px;width:6px;height:6px;background:#fff;"></div>
<div style="left:37px;top:268px;width:5px;height:5px;background:#217346;"></div>
<svg style="left:41px;top:234px;" width="18" height="27" viewBox="0 0 18 27"><path d="M1.6 7.6V7.1A5 5 0 0 1 6.6 2.1H11.2A5 5 0 0 1 16.2 7.1V7.6 M1.6 8.5V15.3A5 5 0 0 0 6.6 20.3H11.2A5 5 0 0 0 16.2 15.3V8.5" fill="none" stroke="#fff" stroke-width="1.8"/><path d="M6 22.8H12.2" stroke="#fff" stroke-width="1.2"/><path d="M7 24.4H11.2L9.8 25.9H8.4Z" fill="#fff"/></svg>
<span id="t90" class="t" style="left:61.46px;top:239.03px;font-size:14px;line-height:14px;color:#fff;transform:scaleX(0.9516);">LUZ</span>
<div style="left:90.3px;top:239px;width:1.4px;height:14.5px;background:#9a9a9a;"></div>
<span id="t91" class="t" style="left:94.75px;top:241.03px;font-size:6px;line-height:6px;color:#bdbdbd;transform:scaleX(0.9539);">Planilhas</span>
<span id="t92" class="t" style="left:94.75px;top:247.03px;font-size:6px;line-height:6px;color:#bdbdbd;transform:scaleX(0.9519);">Empresariais</span>
<span id="t93" class="t" style="left:175.67px;top:242.02px;font-size:11.7px;line-height:11.7px;color:#fff;transform:scaleX(0.9115);font-weight:bold;">CADASTRO</span>
<span id="t94" class="t" style="left:289.03px;top:242.02px;font-size:11.7px;line-height:11.7px;color:#fff;transform:scaleX(0.9128);font-weight:bold;">PPRA</span>
<span id="t95" class="t" style="left:381.50px;top:242.02px;font-size:11.7px;line-height:11.7px;color:#fff;transform:scaleX(0.9630);font-weight:bold;">PCMSO</span>
<span id="t96" class="t" style="left:462.17px;top:234.02px;font-size:11.7px;line-height:11.7px;color:#fff;transform:scaleX(0.9127);font-weight:bold;">CONTROLE DE</span>
<span id="t97" class="t" style="left:470.53px;top:250.03px;font-size:11.7px;line-height:11.7px;color:#fff;transform:scaleX(0.9134);font-weight:bold;">ACIDENTES</span>
<span id="t98" class="t" style="left:560.57px;top:234.02px;font-size:11.7px;line-height:11.7px;color:#fff;transform:scaleX(0.9127);font-weight:bold;">CONTROLE DE</span>
<span id="t99" class="t" style="left:576.32px;top:250.03px;font-size:11.7px;line-height:11.7px;color:#fff;transform:scaleX(0.9365);font-weight:bold;">EXAMES</span>
<span id="t100" class="t" style="left:662.72px;top:242.02px;font-size:11.7px;line-height:11.7px;color:#fff;transform:scaleX(0.9239);font-weight:bold;">RELATÓRIOS</span>
<span id="t101" class="t" style="left:762.71px;top:242.02px;font-size:11.7px;line-height:11.7px;color:#fff;transform:scaleX(0.9424);font-weight:bold;">DASHBOARD</span>
<span id="t102" class="t" style="left:863.03px;top:242.02px;font-size:11.7px;line-height:11.7px;color:#fff;transform:scaleX(0.9132);font-weight:bold;">INSTRUÇÕES</span>
<div style="left:128px;top:279px;width:163px;height:27px;background:#fff;"></div>
<span id="t103" class="t" style="left:136.73px;top:288.03px;font-size:11.7px;line-height:11.7px;color:#000;transform:scaleX(0.9190);font-weight:bold;">RELATÓRIO DE ACIDENTES</span>
<span id="t104" class="t" style="left:308.92px;top:288.03px;font-size:11.7px;line-height:11.7px;color:#fff;transform:scaleX(0.9292);font-weight:bold;">RELATÓRIO DE EXAMES</span>
<span id="t105" class="t" style="left:468.62px;top:288.03px;font-size:11.7px;line-height:11.7px;color:#fff;transform:scaleX(0.9272);font-weight:bold;">IMPRESSÃO DE RELATÓRIO</span>
<div style="left:50px;top:329px;width:503px;height:26px;background:#bfbfbf;"></div>
<span id="t106" class="t" style="left:58.82px;top:336.02px;font-size:11.6px;line-height:11.6px;color:#3f3f3f;transform:scaleX(0.9739);font-weight:bold;">Análise de Acidentes</span>
<div style="left:571px;top:329px;width:737px;height:26px;background:#bfbfbf;"></div>
<span id="t107" class="t" style="left:580.02px;top:336.02px;font-size:11.6px;line-height:11.6px;color:#3f3f3f;transform:scaleX(0.9743);font-weight:bold;">Análise de Acidentes por Área</span>
<div style="left:50px;top:358px;width:87px;height:40px;background:#d9d9d9;"></div>
<div style="left:140px;top:358px;width:69px;height:40px;background:#d9d9d9;"></div>
<div style="left:212px;top:358px;width:83px;height:40px;background:#ffc000;"></div>
<div style="left:298px;top:358px;width:83px;height:40px;background:#ff9900;"></div>
<div style="left:384px;top:358px;width:83px;height:40px;background:#f8432e;"></div>
<div style="left:470px;top:358px;width:83px;height:40px;background:#3f3f3f;"></div>
<div style="left:571px;top:358px;width:146px;height:40px;background:#d9d9d9;"></div>
<div style="left:720px;top:358px;width:92px;height:40px;background:#d9d9d9;"></div>
<div style="left:815px;top:358px;width:83px;height:40px;background:#ffc000;"></div>
<div style="left:901px;top:358px;width:83px;height:40px;background:#ff9900;"></div>
<div style="left:987px;top:358px;width:83px;height:40px;background:#f8432e;"></div>
<div style="left:1073px;top:358px;width:83px;height:40px;background:#3f3f3f;"></div>
<div style="left:1159px;top:358px;width:73px;height:40px;background:#d9d9d9;"></div>
<div style="left:1235px;top:358px;width:73px;height:40px;background:#d9d9d9;"></div>
<span id="t108" class="t" style="left:58.19px;top:372.03px;font-size:11.6px;line-height:11.6px;color:#3f3f3f;transform:scaleX(1.1152);font-weight:bold;">Item</span>
<span id="t109" class="t" style="left:148.82px;top:372.03px;font-size:11.6px;line-height:11.6px;color:#3f3f3f;transform:scaleX(0.9856);font-weight:bold;">Acidentes</span>
<span id="t110" class="t" style="left:220.29px;top:363.02px;font-size:11.6px;line-height:11.6px;color:#fff;transform:scaleX(0.9828);font-weight:bold;">Feridos</span>
<span id="t111" class="t" style="left:220.26px;top:381.03px;font-size:11.6px;line-height:11.6px;color:#fff;transform:scaleX(1.0228);font-weight:bold;">levemente</span>
<span id="t112" class="t" style="left:306.29px;top:372.03px;font-size:11.6px;line-height:11.6px;color:#fff;transform:scaleX(0.9828);font-weight:bold;">Feridos</span>
<span id="t113" class="t" style="left:392.29px;top:363.02px;font-size:11.6px;line-height:11.6px;color:#fff;transform:scaleX(0.9828);font-weight:bold;">Feridos</span>
<span id="t114" class="t" style="left:392.63px;top:381.03px;font-size:11.6px;line-height:11.6px;color:#fff;transform:scaleX(1.0315);font-weight:bold;">gravemente</span>
<span id="t115" class="t" style="left:478.62px;top:372.03px;font-size:11.6px;line-height:11.6px;color:#fff;transform:scaleX(1.0393);font-weight:bold;">Óbito</span>
<span id="t116" class="t" style="left:580.20px;top:363.02px;font-size:11.6px;line-height:11.6px;color:#3f3f3f;transform:scaleX(0.9787);font-weight:bold;">Top 10 - Áreas com</span>
<span id="t117" class="t" style="left:580.02px;top:381.03px;font-size:11.6px;line-height:11.6px;color:#3f3f3f;transform:scaleX(0.9747);font-weight:bold;">Acidentes</span>
<span id="t118" class="t" style="left:728.92px;top:372.03px;font-size:11.6px;line-height:11.6px;color:#3f3f3f;transform:scaleX(0.9856);font-weight:bold;">Acidentes</span>
<span id="t119" class="t" style="left:823.29px;top:363.02px;font-size:11.6px;line-height:11.6px;color:#fff;transform:scaleX(0.9828);font-weight:bold;">Feridos</span>
<span id="t120" class="t" style="left:823.26px;top:381.03px;font-size:11.6px;line-height:11.6px;color:#fff;transform:scaleX(1.0228);font-weight:bold;">levemente</span>
<span id="t121" class="t" style="left:909.29px;top:372.03px;font-size:11.6px;line-height:11.6px;color:#fff;transform:scaleX(0.9828);font-weight:bold;">Feridos</span>
<span id="t122" class="t" style="left:995.29px;top:363.02px;font-size:11.6px;line-height:11.6px;color:#fff;transform:scaleX(0.9828);font-weight:bold;">Feridos</span>
<span id="t123" class="t" style="left:995.63px;top:381.03px;font-size:11.6px;line-height:11.6px;color:#fff;transform:scaleX(1.0315);font-weight:bold;">gravemente</span>
<span id="t124" class="t" style="left:1081.62px;top:372.03px;font-size:11.6px;line-height:11.6px;color:#fff;transform:scaleX(1.0393);font-weight:bold;">Óbito</span>
<span id="t125" class="t" style="left:1167.50px;top:372.03px;font-size:11.6px;line-height:11.6px;color:#3f3f3f;transform:scaleX(1.0979);font-weight:bold;">Meta</span>
<span id="t126" class="t" style="left:1243.28px;top:372.03px;font-size:11.6px;line-height:11.6px;color:#3f3f3f;transform:scaleX(0.9901);font-weight:bold;">Diferença</span>
<div style="left:50px;top:401px;width:87px;height:25px;background:#d9d9d9;"></div>
<div style="left:140px;top:401px;width:69px;height:25px;background:#f2f2f2;"></div>
<div style="left:212px;top:401px;width:83px;height:25px;background:#ffc000;"></div>
<div style="left:298px;top:401px;width:83px;height:25px;background:#ff9900;"></div>
<div style="left:384px;top:401px;width:83px;height:25px;background:#f8432e;"></div>
<div style="left:470px;top:401px;width:83px;height:25px;background:#3f3f3f;"></div>
<span id="t127" class="t" style="left:59.00px;top:408.03px;font-size:11.6px;line-height:11.6px;color:#3f3f3f;transform:scaleX(0.9539);font-weight:bold;">Janeiro</span>
<span id="t128" class="t" style="left:149.10px;top:408.03px;font-size:11.6px;line-height:11.6px;color:#111;transform:scaleX(1.1034);">0</span>
<span id="t129" class="t" style="left:221.10px;top:408.03px;font-size:11.6px;line-height:11.6px;color:#fff;transform:scaleX(1.1034);">0</span>
<span id="t130" class="t" style="left:307.10px;top:408.03px;font-size:11.6px;line-height:11.6px;color:#fff;transform:scaleX(1.1034);">0</span>
<span id="t131" class="t" style="left:393.10px;top:408.03px;font-size:11.6px;line-height:11.6px;color:#fff;transform:scaleX(1.1034);">0</span>
<span id="t132" class="t" style="left:479.10px;top:408.03px;font-size:11.6px;line-height:11.6px;color:#fff;transform:scaleX(1.1034);">0</span>
<div style="left:50px;top:429px;width:87px;height:25px;background:#d9d9d9;"></div>
<div style="left:140px;top:429px;width:69px;height:25px;background:#f2f2f2;"></div>
<div style="left:212px;top:429px;width:83px;height:25px;background:#ffc000;"></div>
<div style="left:298px;top:429px;width:83px;height:25px;background:#ff9900;"></div>
<div style="left:384px;top:429px;width:83px;height:25px;background:#f8432e;"></div>
<div style="left:470px;top:429px;width:83px;height:25px;background:#3f3f3f;"></div>
<span id="t133" class="t" style="left:58.24px;top:436.03px;font-size:11.6px;line-height:11.6px;color:#3f3f3f;transform:scaleX(1.0426);font-weight:bold;">Fevereiro</span>
<span id="t134" class="t" style="left:149.67px;top:436.03px;font-size:11.6px;line-height:11.6px;color:#111;transform:scaleX(0.8751);">1</span>
<span id="t135" class="t" style="left:221.67px;top:436.03px;font-size:11.6px;line-height:11.6px;color:#fff;transform:scaleX(0.8751);">1</span>
<span id="t136" class="t" style="left:307.10px;top:436.03px;font-size:11.6px;line-height:11.6px;color:#fff;transform:scaleX(1.1034);">0</span>
<span id="t137" class="t" style="left:393.10px;top:436.03px;font-size:11.6px;line-height:11.6px;color:#fff;transform:scaleX(1.1034);">0</span>
<span id="t138" class="t" style="left:479.10px;top:436.03px;font-size:11.6px;line-height:11.6px;color:#fff;transform:scaleX(1.1034);">0</span>
<div style="left:50px;top:457px;width:87px;height:25px;background:#d9d9d9;"></div>
<div style="left:140px;top:457px;width:69px;height:25px;background:#f2f2f2;"></div>
<div style="left:212px;top:457px;width:83px;height:25px;background:#ffc000;"></div>
<div style="left:298px;top:457px;width:83px;height:25px;background:#ff9900;"></div>
<div style="left:384px;top:457px;width:83px;height:25px;background:#f8432e;"></div>
<div style="left:470px;top:457px;width:83px;height:25px;background:#3f3f3f;"></div>
<span id="t139" class="t" style="left:58.23px;top:464.03px;font-size:11.6px;line-height:11.6px;color:#3f3f3f;transform:scaleX(1.0586);font-weight:bold;">Março</span>
<span id="t140" class="t" style="left:149.10px;top:464.03px;font-size:11.6px;line-height:11.6px;color:#111;transform:scaleX(1.1034);">0</span>
<span id="t141" class="t" style="left:221.10px;top:464.03px;font-size:11.6px;line-height:11.6px;color:#fff;transform:scaleX(1.1034);">0</span>
<span id="t142" class="t" style="left:307.10px;top:464.03px;font-size:11.6px;line-height:11.6px;color:#fff;transform:scaleX(1.1034);">0</span>
<span id="t143" class="t" style="left:393.10px;top:464.03px;font-size:11.6px;line-height:11.6px;color:#fff;transform:scaleX(1.1034);">0</span>
<span id="t144" class="t" style="left:479.10px;top:464.03px;font-size:11.6px;line-height:11.6px;color:#fff;transform:scaleX(1.1034);">0</span>
<div style="left:50px;top:485px;width:87px;height:25px;background:#d9d9d9;"></div>
<div style="left:140px;top:485px;width:69px;height:25px;background:#f2f2f2;"></div>
<div style="left:212px;top:485px;width:83px;height:25px;background:#ffc000;"></div>
<div style="left:298px;top:485px;width:83px;height:25px;background:#ff9900;"></div>
<div style="left:384px;top:485px;width:83px;height:25px;background:#f8432e;"></div>
<div style="left:470px;top:485px;width:83px;height:25px;background:#3f3f3f;"></div>
<span id="t145" class="t" style="left:58.81px;top:492.03px;font-size:11.6px;line-height:11.6px;color:#3f3f3f;transform:scaleX(1.0252);font-weight:bold;">Abril</span>
<span id="t146" class="t" style="left:149.10px;top:492.03px;font-size:11.6px;line-height:11.6px;color:#111;transform:scaleX(1.1034);">0</span>
<span id="t147" class="t" style="left:221.10px;top:492.03px;font-size:11.6px;line-height:11.6px;color:#fff;transform:scaleX(1.1034);">0</span>
<span id="t148" class="t" style="left:307.10px;top:492.03px;font-size:11.6px;line-height:11.6px;color:#fff;transform:scaleX(1.1034);">0</span>
<span id="t149" class="t" style="left:393.10px;top:492.03px;font-size:11.6px;line-height:11.6px;color:#fff;transform:scaleX(1.1034);">0</span>
<span id="t150" class="t" style="left:479.10px;top:492.03px;font-size:11.6px;line-height:11.6px;color:#fff;transform:scaleX(1.1034);">0</span>
<div style="left:50px;top:513px;width:87px;height:25px;background:#d9d9d9;"></div>
<div style="left:140px;top:513px;width:69px;height:25px;background:#f2f2f2;"></div>
<div style="left:212px;top:513px;width:83px;height:25px;background:#ffc000;"></div>
<div style="left:298px;top:513px;width:83px;height:25px;background:#ff9900;"></div>
<div style="left:384px;top:513px;width:83px;height:25px;background:#f8432e;"></div>
<div style="left:470px;top:513px;width:83px;height:25px;background:#3f3f3f;"></div>
<span id="t151" class="t" style="left:58.21px;top:520.03px;font-size:11.6px;line-height:11.6px;color:#3f3f3f;transform:scaleX(1.0862);font-weight:bold;">Maio</span>
<span id="t152" class="t" style="left:149.10px;top:520.03px;font-size:11.6px;line-height:11.6px;color:#111;transform:scaleX(1.1034);">0</span>
<span id="t153" class="t" style="left:221.10px;top:520.03px;font-size:11.6px;line-height:11.6px;color:#fff;transform:scaleX(1.1034);">0</span>
<span id="t154" class="t" style="left:307.10px;top:520.03px;font-size:11.6px;line-height:11.6px;color:#fff;transform:scaleX(1.1034);">0</span>
<span id="t155" class="t" style="left:393.10px;top:520.03px;font-size:11.6px;line-height:11.6px;color:#fff;transform:scaleX(1.1034);">0</span>
<span id="t156" class="t" style="left:479.10px;top:520.03px;font-size:11.6px;line-height:11.6px;color:#fff;transform:scaleX(1.1034);">0</span>
<div style="left:50px;top:541px;width:87px;height:25px;background:#d9d9d9;"></div>
<div style="left:140px;top:541px;width:69px;height:25px;background:#f2f2f2;"></div>
<div style="left:212px;top:541px;width:83px;height:25px;background:#ffc000;"></div>
<div style="left:298px;top:541px;width:83px;height:25px;background:#ff9900;"></div>
<div style="left:384px;top:541px;width:83px;height:25px;background:#f8432e;"></div>
<div style="left:470px;top:541px;width:83px;height:25px;background:#3f3f3f;"></div>
<span id="t157" class="t" style="left:59.00px;top:548.03px;font-size:11.6px;line-height:11.6px;color:#3f3f3f;transform:scaleX(0.9298);font-weight:bold;">Junho</span>
<span id="t158" class="t" style="left:149.10px;top:548.03px;font-size:11.6px;line-height:11.6px;color:#111;transform:scaleX(1.1034);">0</span>
<span id="t159" class="t" style="left:221.10px;top:548.03px;font-size:11.6px;line-height:11.6px;color:#fff;transform:scaleX(1.1034);">0</span>
<span id="t160" class="t" style="left:307.10px;top:548.03px;font-size:11.6px;line-height:11.6px;color:#fff;transform:scaleX(1.1034);">0</span>
<span id="t161" class="t" style="left:393.10px;top:548.03px;font-size:11.6px;line-height:11.6px;color:#fff;transform:scaleX(1.1034);">0</span>
<span id="t162" class="t" style="left:479.10px;top:548.03px;font-size:11.6px;line-height:11.6px;color:#fff;transform:scaleX(1.1034);">0</span>
<div style="left:50px;top:569px;width:87px;height:25px;background:#d9d9d9;"></div>
<div style="left:140px;top:569px;width:69px;height:25px;background:#f2f2f2;"></div>
<div style="left:212px;top:569px;width:83px;height:25px;background:#ffc000;"></div>
<div style="left:298px;top:569px;width:83px;height:25px;background:#ff9900;"></div>
<div style="left:384px;top:569px;width:83px;height:25px;background:#f8432e;"></div>
<div style="left:470px;top:569px;width:83px;height:25px;background:#3f3f3f;"></div>
<span id="t163" class="t" style="left:59.00px;top:576.03px;font-size:11.6px;line-height:11.6px;color:#3f3f3f;transform:scaleX(0.9328);font-weight:bold;">Julho</span>
<span id="t164" class="t" style="left:149.63px;top:576.03px;font-size:11.6px;line-height:11.6px;color:#111;transform:scaleX(0.9530);">4</span>
<span id="t165" class="t" style="left:221.10px;top:576.03px;font-size:11.6px;line-height:11.6px;color:#fff;transform:scaleX(1.1034);">0</span>
<span id="t166" class="t" style="left:307.17px;top:576.03px;font-size:11.6px;line-height:11.6px;color:#fff;transform:scaleX(0.9747);">2</span>
<span id="t167" class="t" style="left:393.67px;top:576.03px;font-size:11.6px;line-height:11.6px;color:#fff;transform:scaleX(0.8751);">1</span>
<span id="t168" class="t" style="left:479.67px;top:576.03px;font-size:11.6px;line-height:11.6px;color:#fff;transform:scaleX(0.8751);">1</span>
<div style="left:50px;top:597px;width:87px;height:25px;background:#d9d9d9;"></div>
<div style="left:140px;top:597px;width:69px;height:25px;background:#f2f2f2;"></div>
<div style="left:212px;top:597px;width:83px;height:25px;background:#ffc000;"></div>
<div style="left:298px;top:597px;width:83px;height:25px;background:#ff9900;"></div>
<div style="left:384px;top:597px;width:83px;height:25px;background:#f8432e;"></div>
<div style="left:470px;top:597px;width:83px;height:25px;background:#3f3f3f;"></div>
<span id="t169" class="t" style="left:58.82px;top:604.03px;font-size:11.6px;line-height:11.6px;color:#3f3f3f;transform:scaleX(0.9775);font-weight:bold;">Agosto</span>
<span id="t170" class="t" style="left:149.10px;top:604.03px;font-size:11.6px;line-height:11.6px;color:#111;transform:scaleX(1.1034);">0</span>
<span id="t171" class="t" style="left:221.10px;top:604.03px;font-size:11.6px;line-height:11.6px;color:#fff;transform:scaleX(1.1034);">0</span>
<span id="t172" class="t" style="left:307.10px;top:604.03px;font-size:11.6px;line-height:11.6px;color:#fff;transform:scaleX(1.1034);">0</span>
<span id="t173" class="t" style="left:393.10px;top:604.03px;font-size:11.6px;line-height:11.6px;color:#fff;transform:scaleX(1.1034);">0</span>
<span id="t174" class="t" style="left:479.10px;top:604.03px;font-size:11.6px;line-height:11.6px;color:#fff;transform:scaleX(1.1034);">0</span>
<div style="left:50px;top:625px;width:87px;height:25px;background:#d9d9d9;"></div>
<div style="left:140px;top:625px;width:69px;height:25px;background:#f2f2f2;"></div>
<div style="left:212px;top:625px;width:83px;height:25px;background:#ffc000;"></div>
<div style="left:298px;top:625px;width:83px;height:25px;background:#ff9900;"></div>
<div style="left:384px;top:625px;width:83px;height:25px;background:#f8432e;"></div>
<div style="left:470px;top:625px;width:83px;height:25px;background:#3f3f3f;"></div>
<span id="t175" class="t" style="left:58.81px;top:632.03px;font-size:11.6px;line-height:11.6px;color:#3f3f3f;transform:scaleX(1.0427);font-weight:bold;">Setembro</span>
<span id="t176" class="t" style="left:149.10px;top:632.03px;font-size:11.6px;line-height:11.6px;color:#111;transform:scaleX(1.1034);">0</span>
<span id="t177" class="t" style="left:221.10px;top:632.03px;font-size:11.6px;line-height:11.6px;color:#fff;transform:scaleX(1.1034);">0</span>
<span id="t178" class="t" style="left:307.10px;top:632.03px;font-size:11.6px;line-height:11.6px;color:#fff;transform:scaleX(1.1034);">0</span>
<span id="t179" class="t" style="left:393.10px;top:632.03px;font-size:11.6px;line-height:11.6px;color:#fff;transform:scaleX(1.1034);">0</span>
<span id="t180" class="t" style="left:479.10px;top:632.03px;font-size:11.6px;line-height:11.6px;color:#fff;transform:scaleX(1.1034);">0</span>
<div style="left:50px;top:653px;width:87px;height:25px;background:#d9d9d9;"></div>
<div style="left:140px;top:653px;width:69px;height:25px;background:#f2f2f2;"></div>
<div style="left:212px;top:653px;width:83px;height:25px;background:#ffc000;"></div>
<div style="left:298px;top:653px;width:83px;height:25px;background:#ff9900;"></div>
<div style="left:384px;top:653px;width:83px;height:25px;background:#f8432e;"></div>
<div style="left:470px;top:653px;width:83px;height:25px;background:#3f3f3f;"></div>
<span id="t181" class="t" style="left:58.62px;top:660.03px;font-size:11.6px;line-height:11.6px;color:#3f3f3f;transform:scaleX(1.0444);font-weight:bold;">Outubro</span>
<span id="t182" class="t" style="left:149.10px;top:660.03px;font-size:11.6px;line-height:11.6px;color:#111;transform:scaleX(1.1034);">0</span>
<span id="t183" class="t" style="left:221.10px;top:660.03px;font-size:11.6px;line-height:11.6px;color:#fff;transform:scaleX(1.1034);">0</span>
<span id="t184" class="t" style="left:307.10px;top:660.03px;font-size:11.6px;line-height:11.6px;color:#fff;transform:scaleX(1.1034);">0</span>
<span id="t185" class="t" style="left:393.10px;top:660.03px;font-size:11.6px;line-height:11.6px;color:#fff;transform:scaleX(1.1034);">0</span>
<span id="t186" class="t" style="left:479.10px;top:660.03px;font-size:11.6px;line-height:11.6px;color:#fff;transform:scaleX(1.1034);">0</span>
<div style="left:50px;top:681px;width:87px;height:25px;background:#d9d9d9;"></div>
<div style="left:140px;top:681px;width:69px;height:25px;background:#f2f2f2;"></div>
<div style="left:212px;top:681px;width:83px;height:25px;background:#ffc000;"></div>
<div style="left:298px;top:681px;width:83px;height:25px;background:#ff9900;"></div>
<div style="left:384px;top:681px;width:83px;height:25px;background:#f8432e;"></div>
<div style="left:470px;top:681px;width:83px;height:25px;background:#3f3f3f;"></div>
<span id="t187" class="t" style="left:58.24px;top:688.03px;font-size:11.6px;line-height:11.6px;color:#3f3f3f;transform:scaleX(1.0487);font-weight:bold;">Novembro</span>
<span id="t188" class="t" style="left:149.10px;top:688.03px;font-size:11.6px;line-height:11.6px;color:#111;transform:scaleX(1.1034);">0</span>
<span id="t189" class="t" style="left:221.10px;top:688.03px;font-size:11.6px;line-height:11.6px;color:#fff;transform:scaleX(1.1034);">0</span>
<span id="t190" class="t" style="left:307.10px;top:688.03px;font-size:11.6px;line-height:11.6px;color:#fff;transform:scaleX(1.1034);">0</span>
<span id="t191" class="t" style="left:393.10px;top:688.03px;font-size:11.6px;line-height:11.6px;color:#fff;transform:scaleX(1.1034);">0</span>
<span id="t192" class="t" style="left:479.10px;top:688.03px;font-size:11.6px;line-height:11.6px;color:#fff;transform:scaleX(1.1034);">0</span>
<div style="left:50px;top:709px;width:87px;height:8px;background:#d9d9d9;"></div>
<div style="left:140px;top:709px;width:69px;height:8px;background:#f2f2f2;"></div>
<div style="left:212px;top:709px;width:83px;height:8px;background:#ffc000;"></div>
<div style="left:298px;top:709px;width:83px;height:8px;background:#ff9900;"></div>
<div style="left:384px;top:709px;width:83px;height:8px;background:#f8432e;"></div>
<div style="left:470px;top:709px;width:83px;height:8px;background:#3f3f3f;"></div>
<div style="left:571px;top:401px;width:146px;height:25px;background:#f2f2f2;"></div>
<div style="left:720px;top:401px;width:92px;height:25px;background:#f2f2f2;"></div>
<div style="left:815px;top:401px;width:83px;height:25px;background:#ffc000;"></div>
<div style="left:901px;top:401px;width:83px;height:25px;background:#ff9900;"></div>
<div style="left:987px;top:401px;width:83px;height:25px;background:#f8432e;"></div>
<div style="left:1073px;top:401px;width:83px;height:25px;background:#3f3f3f;"></div>
<div style="left:1159px;top:401px;width:73px;height:25px;background:#f2f2f2;"></div>
<div style="left:1235px;top:401px;width:73px;height:25px;background:#54ad3c;"></div>
<span id="t193" class="t" style="left:579.63px;top:408.03px;font-size:11.6px;line-height:11.6px;color:#111;transform:scaleX(1.0423);">Operações</span>
<span id="t194" class="t" style="left:729.17px;top:408.03px;font-size:11.6px;line-height:11.6px;color:#111;transform:scaleX(0.9747);">2</span>
<span id="t195" class="t" style="left:824.10px;top:408.03px;font-size:11.6px;line-height:11.6px;color:#fff;transform:scaleX(1.1034);">0</span>
<span id="t196" class="t" style="left:910.67px;top:408.03px;font-size:11.6px;line-height:11.6px;color:#fff;transform:scaleX(0.8751);">1</span>
<span id="t197" class="t" style="left:996.67px;top:408.03px;font-size:11.6px;line-height:11.6px;color:#fff;transform:scaleX(0.8751);">1</span>
<span id="t198" class="t" style="left:1082.10px;top:408.03px;font-size:11.6px;line-height:11.6px;color:#fff;transform:scaleX(1.1034);">0</span>
<span id="t199" class="t" style="left:1168.56px;top:408.03px;font-size:11.6px;line-height:11.6px;color:#111;transform:scaleX(1.0262);">10</span>
<span id="t200" class="t" style="left:1244.21px;top:408.03px;font-size:11.6px;line-height:11.6px;color:#fff;transform:scaleX(1.0679);">8</span>
<div style="left:571px;top:429px;width:146px;height:25px;background:#f2f2f2;"></div>
<div style="left:720px;top:429px;width:92px;height:25px;background:#f2f2f2;"></div>
<div style="left:815px;top:429px;width:83px;height:25px;background:#ffc000;"></div>
<div style="left:901px;top:429px;width:83px;height:25px;background:#ff9900;"></div>
<div style="left:987px;top:429px;width:83px;height:25px;background:#f8432e;"></div>
<div style="left:1073px;top:429px;width:83px;height:25px;background:#3f3f3f;"></div>
<div style="left:1159px;top:429px;width:73px;height:25px;background:#f2f2f2;"></div>
<div style="left:1235px;top:429px;width:73px;height:25px;background:#54ad3c;"></div>
<span id="t201" class="t" style="left:579.60px;top:436.03px;font-size:11.6px;line-height:11.6px;color:#111;transform:scaleX(1.1083);">Contabilidade</span>
<span id="t202" class="t" style="left:729.67px;top:436.03px;font-size:11.6px;line-height:11.6px;color:#111;transform:scaleX(0.8751);">1</span>
<span id="t203" class="t" style="left:824.67px;top:436.03px;font-size:11.6px;line-height:11.6px;color:#fff;transform:scaleX(0.8751);">1</span>
<span id="t204" class="t" style="left:910.10px;top:436.03px;font-size:11.6px;line-height:11.6px;color:#fff;transform:scaleX(1.1034);">0</span>
<span id="t205" class="t" style="left:996.10px;top:436.03px;font-size:11.6px;line-height:11.6px;color:#fff;transform:scaleX(1.1034);">0</span>
<span id="t206" class="t" style="left:1082.10px;top:436.03px;font-size:11.6px;line-height:11.6px;color:#fff;transform:scaleX(1.1034);">0</span>
<span id="t207" class="t" style="left:1168.17px;top:436.03px;font-size:11.6px;line-height:11.6px;color:#111;transform:scaleX(0.9747);">2</span>
<span id="t208" class="t" style="left:1244.67px;top:436.03px;font-size:11.6px;line-height:11.6px;color:#fff;transform:scaleX(0.8751);">1</span>
<div style="left:571px;top:457px;width:146px;height:25px;background:#f2f2f2;"></div>
<div style="left:720px;top:457px;width:92px;height:25px;background:#f2f2f2;"></div>
<div style="left:815px;top:457px;width:83px;height:25px;background:#ffc000;"></div>
<div style="left:901px;top:457px;width:83px;height:25px;background:#ff9900;"></div>
<div style="left:987px;top:457px;width:83px;height:25px;background:#f8432e;"></div>
<div style="left:1073px;top:457px;width:83px;height:25px;background:#3f3f3f;"></div>
<div style="left:1159px;top:457px;width:73px;height:25px;background:#f2f2f2;"></div>
<div style="left:1235px;top:457px;width:73px;height:25px;background:#54ad3c;"></div>
<span id="t209" class="t" style="left:579.26px;top:464.03px;font-size:11.6px;line-height:11.6px;color:#111;transform:scaleX(1.0352);">Logística</span>
<span id="t210" class="t" style="left:729.67px;top:464.03px;font-size:11.6px;line-height:11.6px;color:#111;transform:scaleX(0.8751);">1</span>
<span id="t211" class="t" style="left:824.10px;top:464.03px;font-size:11.6px;line-height:11.6px;color:#fff;transform:scaleX(1.1034);">0</span>
<span id="t212" class="t" style="left:910.10px;top:464.03px;font-size:11.6px;line-height:11.6px;color:#fff;transform:scaleX(1.1034);">0</span>
<span id="t213" class="t" style="left:996.10px;top:464.03px;font-size:11.6px;line-height:11.6px;color:#fff;transform:scaleX(1.1034);">0</span>
<span id="t214" class="t" style="left:1082.67px;top:464.03px;font-size:11.6px;line-height:11.6px;color:#fff;transform:scaleX(0.8751);">1</span>
<span id="t215" class="t" style="left:1168.46px;top:464.03px;font-size:11.6px;line-height:11.6px;color:#111;transform:scaleX(0.9433);">5</span>
<span id="t216" class="t" style="left:1244.63px;top:464.03px;font-size:11.6px;line-height:11.6px;color:#fff;transform:scaleX(0.9530);">4</span>
<div style="left:571px;top:485px;width:146px;height:25px;background:#f2f2f2;"></div>
<div style="left:720px;top:485px;width:92px;height:25px;background:#f2f2f2;"></div>
<div style="left:815px;top:485px;width:83px;height:25px;background:#ffc000;"></div>
<div style="left:901px;top:485px;width:83px;height:25px;background:#ff9900;"></div>
<div style="left:987px;top:485px;width:83px;height:25px;background:#f8432e;"></div>
<div style="left:1073px;top:485px;width:83px;height:25px;background:#3f3f3f;"></div>
<div style="left:1159px;top:485px;width:73px;height:25px;background:#f2f2f2;"></div>
<div style="left:1235px;top:485px;width:73px;height:25px;background:#54ad3c;"></div>
<span id="t217" class="t" style="left:580.00px;top:492.03px;font-size:11.6px;line-height:11.6px;color:#111;transform:scaleX(1.0759);">Jurídico</span>
<span id="t218" class="t" style="left:729.67px;top:492.03px;font-size:11.6px;line-height:11.6px;color:#111;transform:scaleX(0.8751);">1</span>
<span id="t219" class="t" style="left:824.10px;top:492.03px;font-size:11.6px;line-height:11.6px;color:#fff;transform:scaleX(1.1034);">0</span>
<span id="t220" class="t" style="left:910.67px;top:492.03px;font-size:11.6px;line-height:11.6px;color:#fff;transform:scaleX(0.8751);">1</span>
<span id="t221" class="t" style="left:996.10px;top:492.03px;font-size:11.6px;line-height:11.6px;color:#fff;transform:scaleX(1.1034);">0</span>
<span id="t222" class="t" style="left:1082.10px;top:492.03px;font-size:11.6px;line-height:11.6px;color:#fff;transform:scaleX(1.1034);">0</span>
<span id="t223" class="t" style="left:1168.67px;top:492.03px;font-size:11.6px;line-height:11.6px;color:#111;transform:scaleX(0.8751);">1</span>
<span id="t224" class="t" style="left:1244.10px;top:492.03px;font-size:11.6px;line-height:11.6px;color:#fff;transform:scaleX(1.1034);">0</span>
<div style="left:571px;top:513px;width:146px;height:25px;background:#f2f2f2;"></div>
<div style="left:720px;top:513px;width:92px;height:25px;background:#f2f2f2;"></div>
<div style="left:815px;top:513px;width:83px;height:25px;background:#ffc000;"></div>
<div style="left:901px;top:513px;width:83px;height:25px;background:#ff9900;"></div>
<div style="left:987px;top:513px;width:83px;height:25px;background:#f8432e;"></div>
<div style="left:1073px;top:513px;width:83px;height:25px;background:#3f3f3f;"></div>
<div style="left:1159px;top:513px;width:73px;height:25px;background:#f2f2f2;"></div>
<div style="left:1235px;top:513px;width:73px;height:25px;background:#f2f2f2;"></div>
<div style="left:571px;top:541px;width:146px;height:25px;background:#f2f2f2;"></div>
<div style="left:720px;top:541px;width:92px;height:25px;background:#f2f2f2;"></div>
<div style="left:815px;top:541px;width:83px;height:25px;background:#ffc000;"></div>
<div style="left:901px;top:541px;width:83px;height:25px;background:#ff9900;"></div>
<div style="left:987px;top:541px;width:83px;height:25px;background:#f8432e;"></div>
<div style="left:1073px;top:541px;width:83px;height:25px;background:#3f3f3f;"></div>
<div style="left:1159px;top:541px;width:73px;height:25px;background:#f2f2f2;"></div>
<div style="left:1235px;top:541px;width:73px;height:25px;background:#f2f2f2;"></div>
<div style="left:571px;top:569px;width:146px;height:25px;background:#f2f2f2;"></div>
<div style="left:720px;top:569px;width:92px;height:25px;background:#f2f2f2;"></div>
<div style="left:815px;top:569px;width:83px;height:25px;background:#ffc000;"></div>
<div style="left:901px;top:569px;width:83px;height:25px;background:#ff9900;"></div>
<div style="left:987px;top:569px;width:83px;height:25px;background:#f8432e;"></div>
<div style="left:1073px;top:569px;width:83px;height:25px;background:#3f3f3f;"></div>
<div style="left:1159px;top:569px;width:73px;height:25px;background:#f2f2f2;"></div>
<div style="left:1235px;top:569px;width:73px;height:25px;background:#f2f2f2;"></div>
<div style="left:571px;top:597px;width:146px;height:25px;background:#f2f2f2;"></div>
<div style="left:720px;top:597px;width:92px;height:25px;background:#f2f2f2;"></div>
<div style="left:815px;top:597px;width:83px;height:25px;background:#ffc000;"></div>
<div style="left:901px;top:597px;width:83px;height:25px;background:#ff9900;"></div>
<div style="left:987px;top:597px;width:83px;height:25px;background:#f8432e;"></div>
<div style="left:1073px;top:597px;width:83px;height:25px;background:#3f3f3f;"></div>
<div style="left:1159px;top:597px;width:73px;height:25px;background:#f2f2f2;"></div>
<div style="left:1235px;top:597px;width:73px;height:25px;background:#f2f2f2;"></div>
<div style="left:571px;top:625px;width:146px;height:25px;background:#f2f2f2;"></div>
<div style="left:720px;top:625px;width:92px;height:25px;background:#f2f2f2;"></div>
<div style="left:815px;top:625px;width:83px;height:25px;background:#ffc000;"></div>
<div style="left:901px;top:625px;width:83px;height:25px;background:#ff9900;"></div>
<div style="left:987px;top:625px;width:83px;height:25px;background:#f8432e;"></div>
<div style="left:1073px;top:625px;width:83px;height:25px;background:#3f3f3f;"></div>
<div style="left:1159px;top:625px;width:73px;height:25px;background:#f2f2f2;"></div>
<div style="left:1235px;top:625px;width:73px;height:25px;background:#f2f2f2;"></div>
<div style="left:571px;top:653px;width:146px;height:25px;background:#f2f2f2;"></div>
<div style="left:720px;top:653px;width:92px;height:25px;background:#f2f2f2;"></div>
<div style="left:815px;top:653px;width:83px;height:25px;background:#ffc000;"></div>
<div style="left:901px;top:653px;width:83px;height:25px;background:#ff9900;"></div>
<div style="left:987px;top:653px;width:83px;height:25px;background:#f8432e;"></div>
<div style="left:1073px;top:653px;width:83px;height:25px;background:#3f3f3f;"></div>
<div style="left:1159px;top:653px;width:73px;height:25px;background:#f2f2f2;"></div>
<div style="left:1235px;top:653px;width:73px;height:25px;background:#f2f2f2;"></div>
<div style="left:1344px;top:223px;width:1px;height:494px;background:#a8a8a8;"></div>
<div style="left:1348px;top:224px;width:15px;height:478px;background:#dbdbdb;"></div>
<div style="left:1348px;top:209px;width:15px;height:14.5px;background:#fff;border:1px solid #ababab;"></div>
<svg style="left:1351.5px;top:213.5px;" width="8" height="5" viewBox="0 0 8 5"><path d="M0 5L4 0.5L8 5Z" fill="#777"/></svg>
<div style="left:1348px;top:224.5px;width:15px;height:57px;background:#fff;border:1px solid #ababab;"></div>
<div style="left:1348px;top:702.5px;width:15px;height:14.5px;background:#fff;border:1px solid #ababab;"></div>
<svg style="left:1351.5px;top:707.5px;" width="8" height="5" viewBox="0 0 8 5"><path d="M0 0L4 4.5L8 0Z" fill="#777"/></svg>
<div style="left:0px;top:717px;width:1345px;height:1px;background:#a6a6a6;"></div>
<div style="left:0px;top:745px;width:1366px;height:1px;background:#c6c6c6;"></div>
<div style="left:0px;top:746px;width:1366px;height:20px;background:#f3f2f1;"></div>
<svg style="left:27px;top:727px;" width="5" height="7.5" viewBox="0 0 5 7.5"><path d="M5 0V7.5L0 3.75Z" fill="#c0c0c0"/></svg>
<svg style="left:56px;top:727px;" width="5" height="7.5" viewBox="0 0 5 7.5"><path d="M0 0V7.5L5 3.75Z" fill="#1e6b41"/></svg>
<div style="left:100px;top:721px;width:1px;height:20px;background:#ababab;"></div>
<div style="left:189px;top:721px;width:1px;height:20px;background:#ababab;"></div>
<div style="left:289px;top:721px;width:1px;height:20px;background:#ababab;"></div>
<div style="left:379px;top:721px;width:1px;height:20px;background:#ababab;"></div>
<div style="left:436px;top:721px;width:1px;height:20px;background:#ababab;"></div>
<div style="left:505px;top:721px;width:1px;height:20px;background:#ababab;"></div>
<div style="left:551px;top:721px;width:1px;height:20px;background:#ababab;"></div>
<div style="left:753px;top:721px;width:1px;height:20px;background:#ababab;"></div>
<div style="left:789px;top:721px;width:1px;height:20px;background:#ababab;"></div>
<div style="left:837px;top:721px;width:1px;height:20px;background:#ababab;"></div>
<div style="left:883px;top:721px;width:1px;height:20px;background:#ababab;"></div>
<div style="left:925px;top:721px;width:1px;height:20px;background:#ababab;"></div>
<span id="t225" class="t" style="left:114.07px;top:725.03px;font-size:12.2px;line-height:12.2px;color:#444;transform:scaleX(0.9195);">CAD_AREA</span>
<span id="t226" class="t" style="left:201.96px;top:725.03px;font-size:12.2px;line-height:12.2px;color:#444;transform:scaleX(0.9451);">CAD_CARGO</span>
<span id="t227" class="t" style="left:301.95px;top:725.03px;font-size:12.2px;line-height:12.2px;color:#444;transform:scaleX(0.9537);">CAD_FUNC</span>
<span id="t228" class="t" style="left:391.12px;top:725.03px;font-size:12.2px;line-height:12.2px;color:#444;transform:scaleX(0.9280);">PPRA</span>
<span id="t229" class="t" style="left:446.84px;top:725.03px;font-size:12.2px;line-height:12.2px;color:#444;transform:scaleX(1.0080);">PCMSO</span>
<span id="t230" class="t" style="left:516.63px;top:725.03px;font-size:12.2px;line-height:12.2px;color:#444;transform:scaleX(1.0001);">C-A</span>
<span id="t231" class="t" style="left:562.95px;top:725.03px;font-size:12.2px;line-height:12.2px;color:#444;transform:scaleX(0.9535);">C-E</span>
<span id="t232" class="t" style="left:683.38px;top:725.03px;font-size:12.2px;line-height:12.2px;color:#444;transform:scaleX(0.9667);">RC_EXAM</span>
<span id="t233" class="t" style="left:764.43px;top:725.03px;font-size:12.2px;line-height:12.2px;color:#444;transform:scaleX(1.0153);">RI</span>
<span id="t234" class="t" style="left:801.59px;top:725.03px;font-size:12.2px;line-height:12.2px;color:#444;transform:scaleX(1.0638);">D-A</span>
<span id="t235" class="t" style="left:848.74px;top:725.03px;font-size:12.2px;line-height:12.2px;color:#444;transform:scaleX(1.0079);">D-E</span>
<span id="t236" class="t" style="left:895.25px;top:725.03px;font-size:12.2px;line-height:12.2px;color:#444;transform:scaleX(1.1009);">INI</span>
<div style="left:595.5px;top:717px;width:76px;height:25px;background:#fff;"></div>
<div style="left:595px;top:717px;width:1px;height:25px;background:#a6a6a6;"></div>
<div style="left:671px;top:717px;width:1px;height:25px;background:#a6a6a6;"></div>
<div style="left:595.5px;top:739.5px;width:76px;height:2.2px;background:#217346;"></div>
<span id="t237" class="t" style="left:606.66px;top:725.03px;font-size:12.2px;line-height:12.2px;color:#217346;transform:scaleX(0.9653);font-weight:bold;">RC_ACID</span>
<div style="left:938.2px;top:720px;width:5.6px;height:20px;overflow:hidden;"><span class="t" style="left:0;top:5.4px;font-size:12.2px;line-height:12.2px;color:#444">D</span></div>
<div style="left:952.8px;top:732.8px;width:2.2px;height:2.2px;background:#145c32;"></div>
<div style="left:956.5px;top:732.8px;width:2.2px;height:2.2px;background:#145c32;"></div>
<div style="left:960.1999999999999px;top:732.8px;width:2.2px;height:2.2px;background:#145c32;"></div>
<svg style="left:976.5px;top:722px;" width="17" height="17" viewBox="0 0 17 17"><circle cx="8.5" cy="8.5" r="7.7" fill="none" stroke="#6a6a6a" stroke-width="1.2"/><path d="M4.5 8.5H12.5 M8.5 4.5V12.5" stroke="#6a6a6a" stroke-width="1.9"/></svg>
<div style="left:1013px;top:726px;width:2px;height:2px;background:#b4b4b4;"></div>
<div style="left:1013px;top:730px;width:2px;height:2px;background:#b4b4b4;"></div>
<div style="left:1013px;top:734px;width:2px;height:2px;background:#b4b4b4;"></div>
<div style="left:1030px;top:724.5px;width:15px;height:14px;background:#fff;border:1px solid #ababab;"></div>
<svg style="left:1035px;top:728px;" width="5" height="7" viewBox="0 0 5 7"><path d="M5 0V7L0.5 3.5Z" fill="#666"/></svg>
<div style="left:1045px;top:724.5px;width:265px;height:14px;background:#fff;border:1px solid #ababab;"></div>
<div style="left:1310px;top:724.5px;width:19.5px;height:14px;background:#dbdbdb;"></div>
<div style="left:1329.5px;top:724.5px;width:14.5px;height:14px;background:#fff;border:1px solid #ababab;"></div>
<svg style="left:1334.5px;top:728px;" width="5" height="7" viewBox="0 0 5 7"><path d="M0 0V7L4.5 3.5Z" fill="#666"/></svg>
<svg style="left:8px;top:749px;" width="14" height="14" viewBox="0 0 14 14"><circle cx="3" cy="3" r="3.1" fill="#5a5a5a"/><path d="M7 1.8H12.6V12.4H1.7V7" fill="none" stroke="#5a5a5a" stroke-width="1.2"/><rect x="7" y="1.2" width="6.2" height="2" fill="#5a5a5a"/><path d="M3.5 6.5H11.2 M3.5 8.5H11.2 M3.5 10.5H11.2" stroke="#5a5a5a" stroke-width="1.1" stroke-dasharray="1.9 1"/></svg>
<div style="left:1086.5px;top:746px;width:37.5px;height:20px;background:#c8c8c8;"></div>
<svg style="left:1098px;top:749px;" width="13" height="13" viewBox="0 0 13 13"><path d="M0.5 0.5H12.5V12.5H0.5Z M4.5 0.5V12.5 M8.5 0.5V12.5 M0.5 4.5H12.5 M0.5 8.5H12.5" fill="none" stroke="#6a6a6a" stroke-width="1"/></svg>
<svg style="left:1136px;top:749px;" width="14" height="13" viewBox="0 0 14 13"><rect x="0.5" y="0.5" width="13" height="12" fill="none" stroke="#6a6a6a"/><rect x="3.5" y="2.5" width="7" height="8" fill="none" stroke="#6a6a6a"/><path d="M5 5.5H9 M5 7.5H9" stroke="#6a6a6a"/></svg>
<svg style="left:1174px;top:749px;" width="14" height="13" viewBox="0 0 14 13"><path d="M0.5 0.5H13.5V12.5H0.5Z M0.5 6.5H8.5V0.5 M4.5 0.5V6.5" fill="none" stroke="#6a6a6a"/></svg>
<div style="left:1205px;top:755px;width:6px;height:1.6px;background:#555;"></div>
<div style="left:1215px;top:755.5px;width:100px;height:1px;background:#a0a0a0;"></div>
<div style="left:1265px;top:752px;width:1px;height:8px;background:#a0a0a0;"></div>
<div style="left:1258px;top:749.5px;width:5px;height:12px;background:#6a6a6a;"></div>
<div style="left:1318.5px;top:755px;width:7px;height:1.6px;background:#555;"></div>
<div style="left:1321.2px;top:752.3px;width:1.6px;height:7px;background:#555;"></div>
<span id="t238" class="t" style="left:1336.90px;top:751.02px;font-size:10.4px;line-height:10.4px;color:#444;transform:scaleX(1.0291);">90%</span>
<div style="left:0px;top:766px;width:1366px;height:2px;background:#e0e0e0;"></div>
<div style="left:0px;top:766px;width:48px;height:2px;background:#1e1e1e;"></div>
<div style="left:392px;top:766px;width:297px;height:2px;background:#1e1e1e;"></div>
<div style="left:737px;top:766px;width:629px;height:2px;background:#1e1e1e;"></div>
<div style="left:689px;top:766px;width:48px;height:2px;background:#8a8a8a;"></div>
</div></body></html>
